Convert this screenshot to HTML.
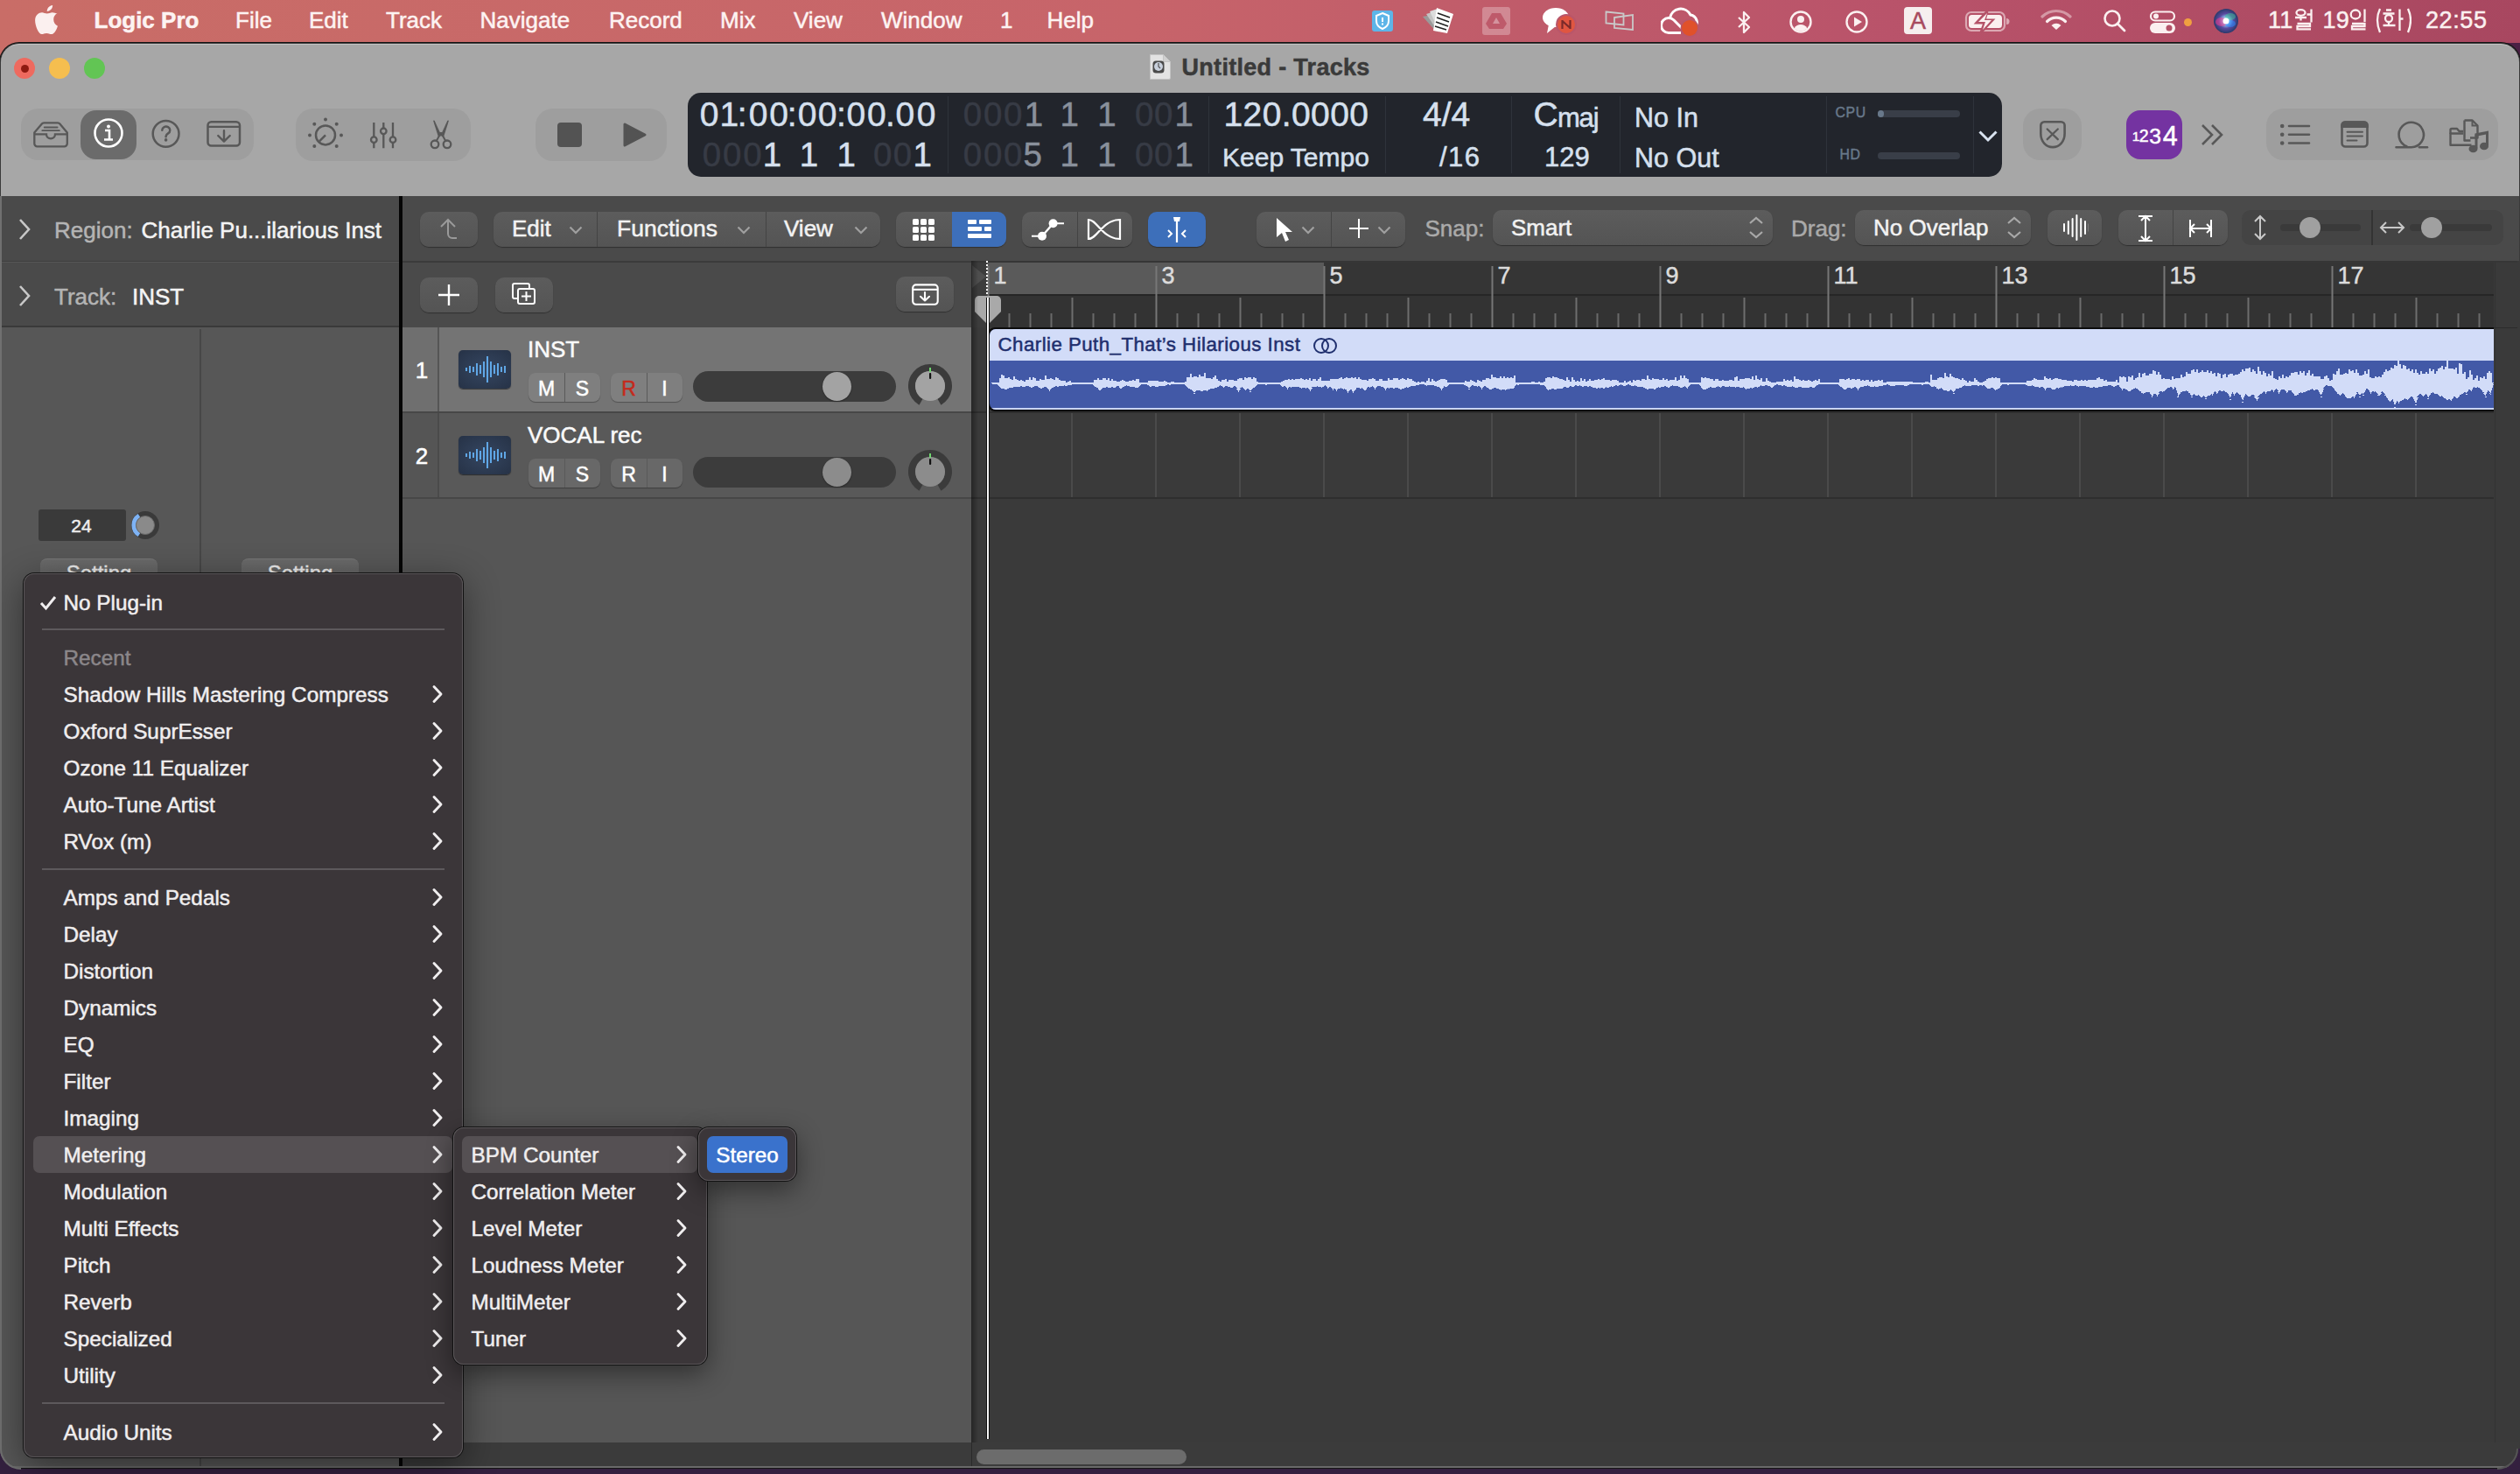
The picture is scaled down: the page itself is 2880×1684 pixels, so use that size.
<!DOCTYPE html>
<html><head><meta charset="utf-8"><style>
html,body{margin:0;padding:0;width:2880px;height:1684px;overflow:hidden;background:#34203f;font-family:"Liberation Sans", sans-serif;}
div,svg{box-sizing:border-box}
div{-webkit-text-stroke-width:0.5px}
</style></head><body>
<div style="position:absolute;left:0px;top:0px;width:2880px;height:52px;background:linear-gradient(90deg,#c96d67 0%,#c7646a 45%,#b9536a 75%,#a84760 100%)"></div><svg style="position:absolute;left:39px;top:5px;" width="30" height="36" viewBox="0 0 30 36"><g transform="scale(1.1)"><path d="M13.500 9.500c-2 0-3.600-1.200-5.300-1.200C5 8.300 1 10.800 1 16.600c0 5.700 3.600 14.400 7 14.400 1.600 0 2.600-1.100 4.900-1.100 2.300 0 2.900 1.100 5 1.100 3 0 5.500-5 6.600-8.600-3-1.300-4.300-3.800-4.300-6.900 0-2.800 1.700-5 3.800-6.100C22.700 9.300 20.500 8.300 18.900 8.300c-2.100 0-3.500 1.200-5.400 1.200zM13.400 7.300c0-3 2.400-6 5.800-6.300.2 3.300-2.400 6.100-5.800 6.300z" fill="#fbf0ef"/></g></svg><div style="position:absolute;left:107.5px;top:8.5px;font-size:26px;line-height:29.9px;color:#fdf3f2;font-weight:700;letter-spacing:0px;white-space:pre;">Logic Pro</div><div style="position:absolute;left:269px;top:8.5px;font-size:26px;line-height:29.9px;color:#fdf3f2;font-weight:400;letter-spacing:0px;white-space:pre;">File</div><div style="position:absolute;left:353px;top:8.5px;font-size:26px;line-height:29.9px;color:#fdf3f2;font-weight:400;letter-spacing:0px;white-space:pre;">Edit</div><div style="position:absolute;left:441px;top:8.5px;font-size:26px;line-height:29.9px;color:#fdf3f2;font-weight:400;letter-spacing:0px;white-space:pre;">Track</div><div style="position:absolute;left:548.5px;top:8.5px;font-size:26px;line-height:29.9px;color:#fdf3f2;font-weight:400;letter-spacing:0px;white-space:pre;">Navigate</div><div style="position:absolute;left:696px;top:8.5px;font-size:26px;line-height:29.9px;color:#fdf3f2;font-weight:400;letter-spacing:0px;white-space:pre;">Record</div><div style="position:absolute;left:823px;top:8.5px;font-size:26px;line-height:29.9px;color:#fdf3f2;font-weight:400;letter-spacing:0px;white-space:pre;">Mix</div><div style="position:absolute;left:907px;top:8.5px;font-size:26px;line-height:29.9px;color:#fdf3f2;font-weight:400;letter-spacing:0px;white-space:pre;">View</div><div style="position:absolute;left:1007px;top:8.5px;font-size:26px;line-height:29.9px;color:#fdf3f2;font-weight:400;letter-spacing:0px;white-space:pre;">Window</div><div style="position:absolute;left:1143px;top:8.5px;font-size:26px;line-height:29.9px;color:#fdf3f2;font-weight:400;letter-spacing:0px;white-space:pre;">1</div><div style="position:absolute;left:1196.5px;top:8.5px;font-size:26px;line-height:29.9px;color:#fdf3f2;font-weight:400;letter-spacing:0px;white-space:pre;">Help</div><div style="position:absolute;left:1568px;top:12px;width:24px;height:24px;background:#5db5e8;border-radius:3px"></div><svg style="position:absolute;left:1568px;top:12px;" width="24" height="24" viewBox="0 0 24 24"><path d="M12 3l7 3v6c0 5-3.5 7.500-7 9-3.500-1.500-7-4-7-9V6z" fill="none" stroke="#fff" stroke-width="2"/><rect x="11" y="8" width="2" height="5" fill="#fff"/><rect x="11" y="14.5" width="2" height="2" fill="#fff"/></svg><svg style="position:absolute;left:1624px;top:7px;" width="40" height="33" viewBox="0 0 40 33"><path d="M2 12l10-2 6 20z" fill="#9a9a9a"/><path d="M6 9l10-3 4 24z" fill="#c4c4c4"/><path d="M10 6l9-3 2 26z" fill="#dcdcdc"/><path d="M18 2l19 7-7 22-16-3z" fill="#fff"/><path d="M19 8l14 5M18 13l14 5M17 18l14 5M16 23l13 4" stroke="#222" stroke-width="1.8"/></svg><div style="position:absolute;left:1694px;top:8px;width:32px;height:32px;background:rgba(255,255,255,.28);border-radius:3px"></div><svg style="position:absolute;left:1694px;top:8px;" width="32" height="32" viewBox="0 0 32 32"><path d="M11 7h10l7 12-4 6H8l-4-6z" fill="#be5a6a"/><path d="M16 12l4 7h-8z" fill="rgba(255,255,255,.35)"/></svg><svg style="position:absolute;left:1762px;top:7px;" width="44" height="34" viewBox="0 0 44 34"><ellipse cx="16" cy="13" rx="15" ry="11" fill="#fff"/><path d="M8 21l-2 10 10-8z" fill="#fff"/><circle cx="28" cy="21" r="12" fill="#b9566a"/><circle cx="28" cy="21" r="10" fill="#e05641"/><path d="M23.5 16v10M32.5 16v10M23.5 17l9 8" stroke="#7a2a2a" stroke-width="2.2"/></svg><svg style="position:absolute;left:1834px;top:12px;" width="34" height="25" viewBox="0 0 34 25"><path d="M1.5 1.5l20 2v13l-20-2z" fill="none" stroke="#c9c9c9" stroke-width="1.8"/><path d="M11 8l21-3v17l-21-2z" fill="none" stroke="#c9c9c9" stroke-width="1.8"/></svg><svg style="position:absolute;left:1898px;top:8px;" width="48" height="36" viewBox="0 0 48 36"><path d="M9 29.500a8.500 8.500 0 0 1 0-17 8.500 8.500 0 0 1 6 2.500l9 9a8.500 8.500 0 0 0 6 2.500" fill="none" stroke="#fff" stroke-width="3"/><path d="M10.500 12.600A12.500 12.500 0 0 1 34 9a9 9 0 0 1 5 15" fill="none" stroke="#fff" stroke-width="3"/><path d="M9 29.500h14" stroke="#fff" stroke-width="3"/><circle cx="33" cy="24" r="10.500" fill="#b9566a"/><circle cx="33" cy="24" r="9" fill="#e0512a"/></svg><svg style="position:absolute;left:1982px;top:12px;" width="22" height="28" viewBox="0 0 22 28"><path d="M5 8l12 11-6 6V2l6 6L5 19" fill="none" stroke="#fbf0f0" stroke-width="2.3" stroke-linejoin="round"/></svg><svg style="position:absolute;left:2044px;top:11px;" width="28" height="28" viewBox="0 0 28 28"><circle cx="14" cy="14" r="11.5" fill="none" stroke="#fbf0f0" stroke-width="2.4"/><circle cx="14" cy="11" r="4" fill="#fbf0f0"/><path d="M6.5 21.5c2-3.500 4.500-4.500 7.500-4.500s5.500 1 7.500 4.500A11 11 0 0 1 6.500 21.500z" fill="#fbf0f0"/></svg><svg style="position:absolute;left:2108px;top:11px;" width="28" height="28" viewBox="0 0 28 28"><circle cx="14" cy="14" r="11.5" fill="none" stroke="#fbf0f0" stroke-width="2.4"/><path d="M11 8.5v11l9-5.500z" fill="#fbf0f0"/></svg><div style="position:absolute;left:2176px;top:8px;width:32px;height:31px;background:#f6eeee;border-radius:4px"></div><div style="position:absolute;left:2176.0px;width:32px;text-align:center;top:8.6px;font-size:27px;line-height:31.0px;color:#a84a5e;font-weight:400;letter-spacing:0px;white-space:pre">A</div><svg style="position:absolute;left:2245px;top:12px;" width="54" height="26" viewBox="0 0 54 26"><rect x="2" y="2" width="44" height="21" rx="6" fill="none" stroke="rgba(251,240,240,.55)" stroke-width="2.2"/><rect x="5" y="5" width="38" height="15" rx="3.5" fill="#fbf0f0"/><path d="M48 9v7a3 3 0 0 0 0-7z" fill="rgba(251,240,240,.55)"/><path d="M26 1L14 14h9l-4 11 13-14h-9z" fill="#b45268" stroke="#b45268" stroke-width="3"/><path d="M26 3L16 13h8l-3 9 10-11h-8z" fill="#fbf0f0"/></svg><svg style="position:absolute;left:2332px;top:10px;" width="36" height="26" viewBox="0 0 36 26"><path d="M2 9a23 23 0 0 1 32 0" fill="none" stroke="rgba(251,240,240,.45)" stroke-width="3.2" stroke-linecap="round"/><path d="M7.5 14.500a15 15 0 0 1 21 0" fill="none" stroke="#fbf0f0" stroke-width="3.2" stroke-linecap="round"/><path d="M18 24l-5.500-5a8 8 0 0 1 11 0z" fill="#fbf0f0"/></svg><svg style="position:absolute;left:2402px;top:9px;" width="30" height="30" viewBox="0 0 30 30"><circle cx="12" cy="12" r="8.5" fill="none" stroke="#fbf0f0" stroke-width="2.6"/><path d="M18 18l8 8" stroke="#fbf0f0" stroke-width="2.8" stroke-linecap="round"/></svg><svg style="position:absolute;left:2456px;top:12px;" width="32" height="27" viewBox="0 0 32 27"><rect x="2" y="1.5" width="27" height="10" rx="5" fill="none" stroke="#fbf0f0" stroke-width="2.2"/><circle cx="8" cy="6.5" r="3" fill="#fbf0f0"/><rect x="1" y="14" width="29" height="12" rx="6" fill="#fbf0f0"/><circle cx="23" cy="20" r="3.5" fill="#b45268"/></svg><div style="position:absolute;left:2496px;top:21px;width:9px;height:9px;background:#f0a040;border-radius:50%"></div><svg style="position:absolute;left:2528px;top:8px;" width="32" height="32" viewBox="0 0 32 32"><defs><radialGradient id="sg" cx="50%" cy="50%" r="50%"><stop offset="0" stop-color="#fff"/><stop offset=".25" stop-color="#9ad7ff"/><stop offset=".6" stop-color="#5a4aa0"/><stop offset="1" stop-color="#2a3a6a"/></radialGradient></defs><circle cx="16" cy="16" r="14" fill="url(#sg)"/><ellipse cx="11" cy="17" rx="7" ry="5" fill="rgba(240,60,140,.55)"/><ellipse cx="21" cy="11" rx="6" ry="4" fill="rgba(60,200,150,.5)"/><ellipse cx="21" cy="19" rx="6" ry="4" fill="rgba(40,140,255,.55)"/><circle cx="16" cy="16" r="3.5" fill="#fff"/></svg><div style="position:absolute;left:2592px;top:7.8px;font-size:27px;line-height:31.0px;color:#fbf0f0;font-weight:400;letter-spacing:0.3px;white-space:pre;">11</div><svg style="position:absolute;left:2622px;top:10px;" width="24" height="25" viewBox="0 0 24 25"><g fill="none" stroke="#fbf0f0" stroke-width="2.3"><ellipse cx="7.5" cy="4.5" rx="5" ry="3.3"/><path d="M1 10h13M7.5 10v3.5M19.5 0.5v15M14.500 6.500h5M3.500 17h14.500v3H3.500v3.300H19"/></g></svg><div style="position:absolute;left:2654.5px;top:7.8px;font-size:27px;line-height:31.0px;color:#fbf0f0;font-weight:400;letter-spacing:0.3px;white-space:pre;">19</div><svg style="position:absolute;left:2685px;top:10px;" width="22" height="25" viewBox="0 0 22 25"><g fill="none" stroke="#fbf0f0" stroke-width="2.3"><ellipse cx="7" cy="6.5" rx="5.3" ry="5"/><path d="M17.5 0.5v14.500M3 17h14.500v3H3v3.300h15.500"/></g></svg><svg style="position:absolute;left:2714px;top:9px;" width="42" height="30" viewBox="0 0 42 30"><g fill="none" stroke="#fbf0f0" stroke-width="2.3"><path d="M6 1Q0 13.500 6 28"/><path d="M38 1Q44 13.500 38 28"/><path d="M13 2.500h6M9.500 6.500h13"/><circle cx="16" cy="12" r="4"/><path d="M16 16v4M9.500 20h14M28.500 1.500v24.500M28.500 12.500h4"/></g></svg><div style="position:absolute;left:2772px;top:7.8px;font-size:27px;line-height:31.0px;color:#fbf0f0;font-weight:400;letter-spacing:0.6px;white-space:pre;">22:55</div><div style="position:absolute;left:0px;top:49px;width:2880px;height:50px;background:linear-gradient(90deg,#c96d67 0%,#c7646a 45%,#9a4260 80%,#4a2044 100%)"></div><div style="position:absolute;left:0px;top:49px;width:2879.5px;height:1628px;background:#3a3a3a;border-radius:22px;box-shadow:0 0 0 1px #151515;overflow:hidden"></div><div style="position:absolute;left:1px;top:50px;width:2877.5px;height:174px;background:#a7a7a7;border-radius:21px 21px 0 0;border-top:1px solid #c4c4c4"></div><div style="position:absolute;left:16px;top:66px;width:24px;height:24px;background:#ee6a5f;border-radius:50%"></div><div style="position:absolute;left:56px;top:66px;width:24px;height:24px;background:#f5be4f;border-radius:50%"></div><div style="position:absolute;left:96px;top:66px;width:24px;height:24px;background:#62c554;border-radius:50%"></div><div style="position:absolute;left:23.5px;top:73.5px;width:9px;height:9px;background:#8f1a11;border-radius:50%"></div><svg style="position:absolute;left:1313px;top:61px;" width="26" height="30" viewBox="0 0 26 30"><path d="M1.500 1.500h15l8 8v18.500a1.500 1.500 0 0 1-1.500 1.500H1.500z" fill="#e3e3e3" stroke="#c4c4c4" stroke-width="1"/><path d="M16.500 1.500v8h8" fill="#d0d0d0" stroke="#c4c4c4" stroke-width="1"/><rect x="4.500" y="8.500" width="13" height="14" rx="3.500" fill="#4a4a4a"/><circle cx="11" cy="15" r="5" fill="#c8d0dc"/><path d="M11 11v4l2 2" stroke="#555" stroke-width="1.200" fill="none"/></svg><div style="position:absolute;left:1350.5px;top:61.6px;font-size:27px;line-height:31.0px;color:#3a3a3a;font-weight:700;letter-spacing:0.3px;white-space:pre;">Untitled - Tracks</div><div style="position:absolute;left:24px;top:124px;width:266px;height:59px;background:#9e9e9e;border-radius:20px"></div><div style="position:absolute;left:92px;top:126px;width:64px;height:56px;background:#6b6b6b;border-radius:18px"></div><svg style="position:absolute;left:34px;top:136px;" width="48" height="36" viewBox="0 0 48 36"><path d="M5.300 15.500L13.800 5.500Q14.600 4.300 16.200 4.300H32Q33.600 4.300 34.400 5.500L42.800 15.500V28a3.300 3.300 0 0 1-3.300 3.300H8.600a3.300 3.300 0 0 1-3.300-3.300z" fill="none" stroke="#585858" stroke-width="2.300" stroke-linejoin="round"/><path d="M5.300 17.300H19a5 5 0 0 0 10 0H42.800" fill="none" stroke="#585858" stroke-width="2.300"/><path d="M16.700 9.500H31.600M14.300 13.200H33.900" stroke="#585858" stroke-width="1.800" stroke-linecap="round"/></svg><svg style="position:absolute;left:106px;top:134px;" width="36" height="36" viewBox="0 0 36 36"><circle cx="18" cy="18" r="15.5" fill="none" stroke="#fff" stroke-width="2.6"/><circle cx="18" cy="10.5" r="2" fill="#fff"/><path d="M14 15h5v10M13 25.5h10" fill="none" stroke="#fff" stroke-width="2.6"/></svg><svg style="position:absolute;left:172px;top:134px;" width="36" height="38" viewBox="0 0 36 38"><circle cx="17.600" cy="18.800" r="14.900" fill="none" stroke="#585858" stroke-width="2.500"/><path d="M13.300 14.700a4.500 4.200 0 1 1 6.800 3.700c-1.300.800-2.500 1.700-2.500 3.300v.500" fill="none" stroke="#585858" stroke-width="2.500" stroke-linecap="round"/><circle cx="17.600" cy="25.900" r="1.800" fill="#585858"/></svg><svg style="position:absolute;left:234px;top:136px;" width="44" height="36" viewBox="0 0 44 36"><rect x="3.500" y="3.300" width="36.500" height="27.300" rx="4" fill="none" stroke="#585858" stroke-width="2.500"/><path d="M3.500 8.800h36.500" stroke="#585858" stroke-width="2.300"/><path d="M22 13.200v12.200M15.300 19l6.700 6.600 6.700-6.600" fill="none" stroke="#585858" stroke-width="2.400" stroke-linecap="round" stroke-linejoin="round"/></svg><div style="position:absolute;left:338px;top:124px;width:200px;height:60px;background:#9e9e9e;border-radius:20px"></div><svg style="position:absolute;left:350px;top:132px;" width="44" height="44" viewBox="0 0 44 44"><circle cx="22" cy="22.4" r="11" fill="none" stroke="#585858" stroke-width="2.5"/><path d="M22 22.4l-7 7" stroke="#585858" stroke-width="2.5"/><circle cx="22.0" cy="4.4" r="2" fill="#585858"/><circle cx="34.7" cy="9.7" r="2" fill="#585858"/><circle cx="9.3" cy="9.7" r="2" fill="#585858"/><circle cx="40.0" cy="22.4" r="2" fill="#585858"/><circle cx="4.0" cy="22.4" r="2" fill="#585858"/><circle cx="34.7" cy="35.1" r="2" fill="#585858"/><circle cx="9.3" cy="35.1" r="2" fill="#585858"/></svg><svg style="position:absolute;left:418px;top:136px;" width="40" height="38" viewBox="0 0 40 38"><path d="M9.3 4v29.300M20.3 4v29.300M31 4v29.300" stroke="#585858" stroke-width="2.3"/><circle cx="9.3" cy="23.700" r="3.300" fill="#9e9e9e" stroke="#585858" stroke-width="2.3"/><circle cx="20.3" cy="13.800" r="3.300" fill="#9e9e9e" stroke="#585858" stroke-width="2.3"/><circle cx="31" cy="23.700" r="3.300" fill="#9e9e9e" stroke="#585858" stroke-width="2.3"/></svg><svg style="position:absolute;left:484px;top:134px;" width="40" height="40" viewBox="0 0 40 40"><path d="M12 4.300L17.500 21.500 19.500 20.500zM28 4.300L22.500 21.500 20.500 20.500z" fill="#585858" stroke="#585858" stroke-width="1.6" stroke-linejoin="round"/><path d="M14.500 27.500L20 17.500M25.500 27.500L20 17.500" stroke="#585858" stroke-width="2"/><circle cx="13" cy="30.800" r="4.300" fill="none" stroke="#585858" stroke-width="2.3"/><circle cx="27" cy="30.800" r="4.300" fill="none" stroke="#585858" stroke-width="2.3"/></svg><div style="position:absolute;left:612px;top:124px;width:150px;height:60px;background:#9e9e9e;border-radius:20px"></div><div style="position:absolute;left:636.5px;top:140px;width:28px;height:28px;background:#535353;border-radius:4px"></div><svg style="position:absolute;left:710px;top:138px;" width="32" height="32" viewBox="0 0 32 32"><path d="M4 4L27 16L4 28z" fill="#535353" stroke="#535353" stroke-width="3" stroke-linejoin="round"/></svg><div style="position:absolute;left:786px;top:106px;width:1502px;height:96px;background:#22252c;border-radius:15px"></div><div style="position:absolute;left:1083px;top:110px;width:1px;height:88px;background:#2f333b"></div><div style="position:absolute;left:1381px;top:110px;width:1px;height:88px;background:#2f333b"></div><div style="position:absolute;left:1583px;top:110px;width:1px;height:88px;background:#2f333b"></div><div style="position:absolute;left:1727px;top:110px;width:1px;height:88px;background:#2f333b"></div><div style="position:absolute;left:1851px;top:110px;width:1px;height:88px;background:#2f333b"></div><div style="position:absolute;left:2087px;top:110px;width:1px;height:88px;background:#2f333b"></div><div style="position:absolute;left:2255px;top:110px;width:1px;height:88px;background:#2f333b"></div><div style="position:absolute;left:790.5px;top:109.0px;width:40px;text-align:center;font-size:39px;line-height:44.8px;color:#d6e0ee;white-space:pre">0</div><div style="position:absolute;left:813.3px;top:109.0px;width:40px;text-align:center;font-size:39px;line-height:44.8px;color:#d6e0ee;white-space:pre">1</div><div style="position:absolute;left:828.1px;top:109.0px;width:40px;text-align:center;font-size:39px;line-height:44.8px;color:#d6e0ee;white-space:pre">:</div><div style="position:absolute;left:846.5px;top:109.0px;width:40px;text-align:center;font-size:39px;line-height:44.8px;color:#d6e0ee;white-space:pre">0</div><div style="position:absolute;left:870.0px;top:109.0px;width:40px;text-align:center;font-size:39px;line-height:44.8px;color:#d6e0ee;white-space:pre">0</div><div style="position:absolute;left:885.2px;top:109.0px;width:40px;text-align:center;font-size:39px;line-height:44.8px;color:#d6e0ee;white-space:pre">:</div><div style="position:absolute;left:902.5px;top:109.0px;width:40px;text-align:center;font-size:39px;line-height:44.8px;color:#d6e0ee;white-space:pre">0</div><div style="position:absolute;left:925.6px;top:109.0px;width:40px;text-align:center;font-size:39px;line-height:44.8px;color:#d6e0ee;white-space:pre">0</div><div style="position:absolute;left:941.4px;top:109.0px;width:40px;text-align:center;font-size:39px;line-height:44.8px;color:#d6e0ee;white-space:pre">:</div><div style="position:absolute;left:958.4px;top:109.0px;width:40px;text-align:center;font-size:39px;line-height:44.8px;color:#d6e0ee;white-space:pre">0</div><div style="position:absolute;left:981.9px;top:109.0px;width:40px;text-align:center;font-size:39px;line-height:44.8px;color:#d6e0ee;white-space:pre">0</div><div style="position:absolute;left:997.4px;top:109.0px;width:40px;text-align:center;font-size:39px;line-height:44.8px;color:#d6e0ee;white-space:pre">.</div><div style="position:absolute;left:1014.3px;top:109.0px;width:40px;text-align:center;font-size:39px;line-height:44.8px;color:#d6e0ee;white-space:pre">0</div><div style="position:absolute;left:1038.5px;top:109.0px;width:40px;text-align:center;font-size:39px;line-height:44.8px;color:#d6e0ee;white-space:pre">0</div><div style="position:absolute;left:793.5px;top:155.3px;width:40px;text-align:center;font-size:38.5px;line-height:44.3px;color:#373b45;white-space:pre">0</div><div style="position:absolute;left:816.7px;top:155.3px;width:40px;text-align:center;font-size:38.5px;line-height:44.3px;color:#373b45;white-space:pre">0</div><div style="position:absolute;left:840.0px;top:155.3px;width:40px;text-align:center;font-size:38.5px;line-height:44.3px;color:#373b45;white-space:pre">0</div><div style="position:absolute;left:862.4px;top:155.3px;width:40px;text-align:center;font-size:38.5px;line-height:44.3px;color:#d6e0ee;white-space:pre">1</div><div style="position:absolute;left:904.4px;top:155.3px;width:40px;text-align:center;font-size:38.5px;line-height:44.3px;color:#d6e0ee;white-space:pre">1</div><div style="position:absolute;left:947.3px;top:155.3px;width:40px;text-align:center;font-size:38.5px;line-height:44.3px;color:#d6e0ee;white-space:pre">1</div><div style="position:absolute;left:988.8px;top:155.3px;width:40px;text-align:center;font-size:38.5px;line-height:44.3px;color:#373b45;white-space:pre">0</div><div style="position:absolute;left:1011.5px;top:155.3px;width:40px;text-align:center;font-size:38.5px;line-height:44.3px;color:#373b45;white-space:pre">0</div><div style="position:absolute;left:1034.2px;top:155.3px;width:40px;text-align:center;font-size:38.5px;line-height:44.3px;color:#d6e0ee;white-space:pre">1</div><div style="position:absolute;left:1091.5px;top:109.4px;width:40px;text-align:center;font-size:38.5px;line-height:44.3px;color:#373b45;white-space:pre">0</div><div style="position:absolute;left:1114.7px;top:109.4px;width:40px;text-align:center;font-size:38.5px;line-height:44.3px;color:#373b45;white-space:pre">0</div><div style="position:absolute;left:1137.7px;top:109.4px;width:40px;text-align:center;font-size:38.5px;line-height:44.3px;color:#373b45;white-space:pre">0</div><div style="position:absolute;left:1161.5px;top:109.4px;width:40px;text-align:center;font-size:38.5px;line-height:44.3px;color:#89909b;white-space:pre">1</div><div style="position:absolute;left:1202.2px;top:109.4px;width:40px;text-align:center;font-size:38.5px;line-height:44.3px;color:#89909b;white-space:pre">1</div><div style="position:absolute;left:1245.0px;top:109.4px;width:40px;text-align:center;font-size:38.5px;line-height:44.3px;color:#89909b;white-space:pre">1</div><div style="position:absolute;left:1287.7px;top:109.4px;width:40px;text-align:center;font-size:38.5px;line-height:44.3px;color:#373b45;white-space:pre">0</div><div style="position:absolute;left:1309.6px;top:109.4px;width:40px;text-align:center;font-size:38.5px;line-height:44.3px;color:#373b45;white-space:pre">0</div><div style="position:absolute;left:1333.2px;top:109.4px;width:40px;text-align:center;font-size:38.5px;line-height:44.3px;color:#89909b;white-space:pre">1</div><div style="position:absolute;left:1091.5px;top:155.3px;width:40px;text-align:center;font-size:38.5px;line-height:44.3px;color:#373b45;white-space:pre">0</div><div style="position:absolute;left:1114.7px;top:155.3px;width:40px;text-align:center;font-size:38.5px;line-height:44.3px;color:#373b45;white-space:pre">0</div><div style="position:absolute;left:1137.7px;top:155.3px;width:40px;text-align:center;font-size:38.5px;line-height:44.3px;color:#373b45;white-space:pre">0</div><div style="position:absolute;left:1160.2px;top:155.3px;width:40px;text-align:center;font-size:38.5px;line-height:44.3px;color:#89909b;white-space:pre">5</div><div style="position:absolute;left:1202.2px;top:155.3px;width:40px;text-align:center;font-size:38.5px;line-height:44.3px;color:#89909b;white-space:pre">1</div><div style="position:absolute;left:1245.0px;top:155.3px;width:40px;text-align:center;font-size:38.5px;line-height:44.3px;color:#89909b;white-space:pre">1</div><div style="position:absolute;left:1287.7px;top:155.3px;width:40px;text-align:center;font-size:38.5px;line-height:44.3px;color:#373b45;white-space:pre">0</div><div style="position:absolute;left:1309.6px;top:155.3px;width:40px;text-align:center;font-size:38.5px;line-height:44.3px;color:#373b45;white-space:pre">0</div><div style="position:absolute;left:1333.2px;top:155.3px;width:40px;text-align:center;font-size:38.5px;line-height:44.3px;color:#89909b;white-space:pre">1</div><div style="position:absolute;left:1398.5px;top:109.1px;font-size:39px;line-height:44.8px;color:#d6e0ee;font-weight:400;letter-spacing:0.4px;white-space:pre;">120.0000</div><div style="position:absolute;left:1397px;top:163.2px;font-size:30px;line-height:34.5px;color:#d6e0ee;font-weight:400;letter-spacing:0px;white-space:pre;">Keep Tempo</div><div style="position:absolute;left:1626px;top:109.1px;font-size:39px;line-height:44.8px;color:#d6e0ee;font-weight:400;letter-spacing:0px;white-space:pre;">4/4</div><div style="position:absolute;left:1645px;top:162.2px;font-size:31px;line-height:35.6px;color:#d6e0ee;font-weight:400;letter-spacing:1.5px;white-space:pre;">/16</div><div style="position:absolute;left:1752.5px;top:109.4px;font-size:39px;line-height:44.8px;color:#d6e0ee;font-weight:400;letter-spacing:0px;white-space:pre;">C</div><div style="position:absolute;left:1780px;top:116.6px;font-size:31px;line-height:35.6px;color:#d6e0ee;font-weight:400;letter-spacing:-1.2px;white-space:pre;">maj</div><div style="position:absolute;left:1765px;top:162.2px;font-size:31px;line-height:35.6px;color:#d6e0ee;font-weight:400;letter-spacing:0px;white-space:pre;">129</div><div style="position:absolute;left:1868px;top:116.6px;font-size:30.5px;line-height:35.1px;color:#d6e0ee;font-weight:400;letter-spacing:0px;white-space:pre;">No In</div><div style="position:absolute;left:1868px;top:162.7px;font-size:30.5px;line-height:35.1px;color:#d6e0ee;font-weight:400;letter-spacing:0px;white-space:pre;">No Out</div><div style="position:absolute;left:2097.5px;top:119.6px;font-size:15.8px;line-height:18.2px;color:#68788a;font-weight:400;letter-spacing:0.6px;white-space:pre;">CPU</div><div style="position:absolute;left:2102.5px;top:167.8px;font-size:15.8px;line-height:18.2px;color:#68788a;font-weight:400;letter-spacing:0.6px;white-space:pre;">HD</div><div style="position:absolute;left:2146px;top:126.2px;width:94px;height:7.8px;background:#393e48;border-radius:4px"></div><div style="position:absolute;left:2146px;top:126.2px;width:6.5px;height:7.8px;background:#68788a;border-radius:4px"></div><div style="position:absolute;left:2146px;top:174px;width:94px;height:7.8px;background:#393e48;border-radius:4px"></div><svg style="position:absolute;left:2258px;top:146px;" width="28" height="20" viewBox="0 0 28 20"><path d="M4.500 4.500l9.500 9.500 9.500-9.500" fill="none" stroke="#d9e3f0" stroke-width="3"/></svg><div style="position:absolute;left:2312px;top:124px;width:67px;height:59px;background:#9e9e9e;border-radius:20px"></div><svg style="position:absolute;left:2330px;top:136px;" width="32" height="36" viewBox="0 0 32 36"><path d="M2.300 7.300a4 4 0 0 1 4-4h19.300a4 4 0 0 1 4 4v9.500c0 9-6.100 15.300-13.650 15.300S2.300 25.800 2.300 16.800z" fill="none" stroke="#585858" stroke-width="2.600"/><path d="M9.700 11.500l12.100 11.700M21.800 11.500L9.700 23.200" stroke="#585858" stroke-width="2.300" stroke-linecap="round"/></svg><div style="position:absolute;left:2430px;top:126px;width:64px;height:56px;background:#7433a1;border-radius:16px"></div><div style="position:absolute;left:2421.1px;top:146.5px;width:40px;text-align:center;font-size:15.5px;line-height:17.8px;color:#fff;white-space:pre">1</div><div style="position:absolute;left:2430.3px;top:144.3px;width:40px;text-align:center;font-size:19.5px;line-height:22.4px;color:#fff;white-space:pre">2</div><div style="position:absolute;left:2443.0px;top:141.5px;width:40px;text-align:center;font-size:24.7px;line-height:28.4px;color:#fff;white-space:pre">3</div><div style="position:absolute;left:2460.3px;top:138.3px;width:40px;text-align:center;font-size:30.5px;line-height:35.1px;color:#fff;white-space:pre">4</div><svg style="position:absolute;left:2514px;top:140px;" width="30" height="28" viewBox="0 0 30 28"><path d="M3 3l11 11L3 25M14 3l11 11L14 25" fill="none" stroke="#585858" stroke-width="2.6"/></svg><div style="position:absolute;left:2590px;top:124px;width:265px;height:59px;background:#9e9e9e;border-radius:20px"></div><svg style="position:absolute;left:2600px;top:136px;" width="44" height="34" viewBox="0 0 44 34"><circle cx="8.200" cy="8" r="2.300" fill="#585858"/><circle cx="8.200" cy="17.750" r="2.300" fill="#585858"/><circle cx="8.200" cy="27.500" r="2.300" fill="#585858"/><path d="M16 8h23M16 17.750h23M16 27.500h23" stroke="#585858" stroke-width="2.600" stroke-linecap="round"/></svg><svg style="position:absolute;left:2672px;top:135px;" width="38" height="36" viewBox="0 0 38 36"><rect x="4.500" y="4.500" width="29" height="28" rx="4" fill="none" stroke="#585858" stroke-width="2.600"/><path d="M3.200 8a4.800 4.800 0 0 1 4.800-4.800h22a4.800 4.800 0 0 1 4.800 4.800v3H3.200z" fill="#585858"/><path d="M10.500 15.700h17.500M10.500 20.500h17.500M10.500 25.500h11" stroke="#585858" stroke-width="2" stroke-linecap="round"/></svg><svg style="position:absolute;left:2734px;top:134px;" width="44" height="40" viewBox="0 0 44 40"><path d="M4.500 34.200H21.800A14.200 14.200 0 1 0 16.500 33.200" fill="none" stroke="#585858" stroke-width="2.600" stroke-linecap="round"/><path d="M31 34.200h9" stroke="#585858" stroke-width="2.600" stroke-linecap="round"/></svg><svg style="position:absolute;left:2796px;top:132px;" width="54" height="44" viewBox="0 0 54 44"><path d="M19 20.500H4.500V33.800h24" fill="none" stroke="#585858" stroke-width="2.400" stroke-linejoin="round"/><path d="M4.500 21V16.500a1.500 1.500 0 0 1 1.500-1.500h6l2.500 3h4.500" fill="none" stroke="#585858" stroke-width="2.400" stroke-linejoin="round"/><path d="M20.500 5.500h9l6 6v14h-8.500M20.500 5.500V28.500h7" fill="none" stroke="#585858" stroke-width="2.400" stroke-linejoin="round"/><path d="M29.500 5.500v6h6" fill="none" stroke="#585858" stroke-width="2"/><path d="M32.500 20.500l15.500-3v3.500l-15.500 3z" fill="#585858"/><path d="M34 21.500v16M46.500 18.500v16" stroke="#585858" stroke-width="3"/><ellipse cx="30.500" cy="38" rx="5" ry="4.300" fill="#585858"/><ellipse cx="43" cy="35" rx="5" ry="4.300" fill="#585858"/></svg><div style="position:absolute;left:2px;top:224px;width:454px;height:1452px;background:#575757"></div><div style="position:absolute;left:2px;top:224px;width:454px;height:75px;background:#4a4a4a;border-bottom:1px solid #3e3e3e"></div><div style="position:absolute;left:2px;top:300px;width:454px;height:74px;background:#4a4a4a;border-bottom:2px solid #3a3a3a"></div><svg style="position:absolute;left:20px;top:248px;" width="16" height="28" viewBox="0 0 16 28"><path d="M3 3l10 11L3 25" fill="none" stroke="#c8c8c8" stroke-width="2.6"/></svg><div style="position:absolute;left:62px;top:248.5px;font-size:26px;line-height:29.9px;color:#b4b4b4;font-weight:400;letter-spacing:0px;white-space:pre;">Region:</div><div style="position:absolute;left:161.5px;top:248.5px;font-size:26px;line-height:29.9px;color:#f4f4f4;font-weight:400;letter-spacing:0px;white-space:pre;">Charlie Pu...ilarious Inst</div><svg style="position:absolute;left:20px;top:324px;" width="16" height="28" viewBox="0 0 16 28"><path d="M3 3l10 11L3 25" fill="none" stroke="#c8c8c8" stroke-width="2.6"/></svg><div style="position:absolute;left:62px;top:325.0px;font-size:26px;line-height:29.9px;color:#b4b4b4;font-weight:400;letter-spacing:0px;white-space:pre;">Track:</div><div style="position:absolute;left:151px;top:325.0px;font-size:26px;line-height:29.9px;color:#f4f4f4;font-weight:400;letter-spacing:0px;white-space:pre;">INST</div><div style="position:absolute;left:228px;top:376px;width:1.5px;height:1300px;background:#474747"></div><div style="position:absolute;left:44px;top:582px;width:100px;height:36px;background:#3a3a3a;border-radius:3px"></div><div style="position:absolute;left:-7.0px;width:200px;text-align:center;top:589.0px;font-size:21px;line-height:24.1px;color:#eee;font-weight:400;letter-spacing:0px;white-space:pre">24</div><div style="position:absolute;left:150px;top:584px;width:32px;height:32px;background:#3a3a3a;border-radius:50%"></div><svg style="position:absolute;left:150px;top:584px;" width="32" height="32" viewBox="0 0 32 32"><path d="M9 27A13 13 0 0 1 9 5" fill="none" stroke="#7eb3f5" stroke-width="5"/><circle cx="16" cy="16" r="10.5" fill="#8a8a8a" stroke="#6a6a6a" stroke-width="1"/></svg><div style="position:absolute;left:46px;top:638px;width:134px;height:40px;background:linear-gradient(#6a6a6a,#5e5e5e);border-radius:8px;border-top:1px solid #777"></div><div style="position:absolute;left:276px;top:638px;width:134px;height:40px;background:linear-gradient(#6a6a6a,#5e5e5e);border-radius:8px;border-top:1px solid #777"></div><div style="position:absolute;left:13.0px;width:200px;text-align:center;top:641.3px;font-size:24px;line-height:27.6px;color:#eee;font-weight:400;letter-spacing:0px;white-space:pre">Setting</div><div style="position:absolute;left:243.0px;width:200px;text-align:center;top:641.3px;font-size:24px;line-height:27.6px;color:#eee;font-weight:400;letter-spacing:0px;white-space:pre">Setting</div><div style="position:absolute;left:456px;top:224px;width:4px;height:1452px;background:#050505"></div><div style="position:absolute;left:460px;top:224px;width:2419px;height:75px;background:#4a4a4a;border-bottom:1px solid #3c3c3c"></div><div style="position:absolute;left:460px;top:300px;width:650px;height:74px;background:#4a4a4a"></div><div style="position:absolute;left:480px;top:242px;width:66px;height:40px;background:linear-gradient(#5c5c5c,#545454);border-radius:10px;box-shadow:0 1px 1px rgba(0,0,0,.35)"></div><svg style="position:absolute;left:500px;top:248px;" width="32" height="28" viewBox="0 0 32 28"><path d="M4 11L12 3l8 8M12 3v16a5 5 0 0 0 5 5h5" fill="none" stroke="#9a9a9a" stroke-width="2"/></svg><div style="position:absolute;left:564px;top:242px;width:442px;height:40px;background:linear-gradient(#5c5c5c,#545454);border-radius:10px;box-shadow:0 1px 1px rgba(0,0,0,.35)"></div><div style="position:absolute;left:682px;top:242px;width:1px;height:40px;background:#444"></div><div style="position:absolute;left:875px;top:242px;width:1px;height:40px;background:#444"></div><div style="position:absolute;left:585px;top:246.5px;font-size:26px;line-height:29.9px;color:#f2f2f2;font-weight:400;letter-spacing:0px;white-space:pre;">Edit</div><div style="position:absolute;left:705px;top:246.0px;font-size:26.5px;line-height:30.5px;color:#f2f2f2;font-weight:400;letter-spacing:0px;white-space:pre;">Functions</div><div style="position:absolute;left:896px;top:246.5px;font-size:26px;line-height:29.9px;color:#f2f2f2;font-weight:400;letter-spacing:0px;white-space:pre;">View</div><svg style="position:absolute;left:650px;top:258px;" width="16" height="10" viewBox="0 0 16 10"><path d="M1.5 1.5L8 8l6.5-6.5" fill="none" stroke="#a0a0a0" stroke-width="2.2"/></svg><svg style="position:absolute;left:842px;top:258px;" width="16" height="10" viewBox="0 0 16 10"><path d="M1.5 1.5L8 8l6.5-6.5" fill="none" stroke="#a0a0a0" stroke-width="2.2"/></svg><svg style="position:absolute;left:976px;top:258px;" width="16" height="10" viewBox="0 0 16 10"><path d="M1.5 1.5L8 8l6.5-6.5" fill="none" stroke="#a0a0a0" stroke-width="2.2"/></svg><div style="position:absolute;left:1024px;top:242px;width:126px;height:40px;background:linear-gradient(#5c5c5c,#545454);border-radius:10px;box-shadow:0 1px 1px rgba(0,0,0,.35)"></div><div style="position:absolute;left:1088px;top:242px;width:62px;height:40px;background:#3d6fba;border-radius:0 10px 10px 0"></div><svg style="position:absolute;left:1040px;top:248px;" width="32" height="28" viewBox="0 0 32 28"><rect x="3" y="2" width="7" height="7" rx="1.5" fill="#fff"/><rect x="3" y="11" width="7" height="7" rx="1.5" fill="#fff"/><rect x="3" y="20" width="7" height="7" rx="1.5" fill="#fff"/><rect x="12" y="2" width="7" height="7" rx="1.5" fill="#fff"/><rect x="12" y="11" width="7" height="7" rx="1.5" fill="#fff"/><rect x="12" y="20" width="7" height="7" rx="1.5" fill="#fff"/><rect x="21" y="2" width="7" height="7" rx="1.5" fill="#fff"/><rect x="21" y="11" width="7" height="7" rx="1.5" fill="#fff"/><rect x="21" y="20" width="7" height="7" rx="1.5" fill="#fff"/></svg><svg style="position:absolute;left:1104px;top:250px;" width="32" height="24" viewBox="0 0 32 24"><rect x="2" y="1" width="10" height="5" rx="1" fill="#fff"/><rect x="15" y="1" width="14" height="5" rx="1" fill="#fff"/><rect x="2" y="9" width="16" height="5" rx="1" fill="#fff"/><rect x="21" y="9" width="8" height="5" rx="1" fill="#fff"/><rect x="2" y="17" width="27" height="5" rx="1" fill="#fff"/></svg><div style="position:absolute;left:1168px;top:242px;width:126px;height:40px;background:linear-gradient(#5c5c5c,#545454);border-radius:10px;box-shadow:0 1px 1px rgba(0,0,0,.35)"></div><div style="position:absolute;left:1231px;top:242px;width:1px;height:40px;background:#444"></div><svg style="position:absolute;left:1176px;top:246px;" width="44" height="34" viewBox="0 0 44 34"><path d="M3 23.8h12M27.600 9.200h12.400" stroke="#fff" stroke-width="2"/><path d="M15 23.800L27.600 9.200" stroke="#fff" stroke-width="2.4"/><circle cx="15" cy="23.800" r="5" fill="#fff"/><circle cx="27.600" cy="9.200" r="5" fill="#fff"/></svg><svg style="position:absolute;left:1242px;top:248px;" width="42" height="30" viewBox="0 0 42 30"><path d="M2 3c10 0 16 22 36 22V3C18 3 12 25 2 25z" fill="none" stroke="#fff" stroke-width="2.2"/></svg><div style="position:absolute;left:1312px;top:242px;width:66px;height:40px;background:#3d6fba;border-radius:10px;box-shadow:0 1px 1px rgba(0,0,0,.35)"></div><svg style="position:absolute;left:1327px;top:246px;" width="36" height="34" viewBox="0 0 36 34"><path d="M14 2h8l-1 5h-6z" fill="#fff"/><path d="M18 5v26" stroke="#fff" stroke-width="2.2"/><path d="M8 17l4 4-4 4M28 17l-4 4 4 4" fill="none" stroke="#fff" stroke-width="2"/></svg><div style="position:absolute;left:1436px;top:242px;width:170px;height:40px;background:linear-gradient(#5c5c5c,#545454);border-radius:10px;box-shadow:0 1px 1px rgba(0,0,0,.35)"></div><div style="position:absolute;left:1521px;top:242px;width:1px;height:40px;background:#444"></div><svg style="position:absolute;left:1455px;top:247px;" width="24" height="32" viewBox="0 0 24 32"><path d="M4 2v22l6-5 4 10 4-2-4-9h8z" fill="#fff"/></svg><svg style="position:absolute;left:1487px;top:258px;" width="16" height="10" viewBox="0 0 16 10"><path d="M1.5 1.5L8 8l6.5-6.5" fill="none" stroke="#a0a0a0" stroke-width="2.2"/></svg><svg style="position:absolute;left:1540px;top:248px;" width="26" height="26" viewBox="0 0 26 26"><path d="M13 2v22M2 13h22" stroke="#fff" stroke-width="2"/></svg><svg style="position:absolute;left:1574px;top:258px;" width="16" height="10" viewBox="0 0 16 10"><path d="M1.5 1.5L8 8l6.5-6.5" fill="none" stroke="#a0a0a0" stroke-width="2.2"/></svg><div style="position:absolute;left:1628.5px;top:246.5px;font-size:26px;line-height:29.9px;color:#aaaaaa;font-weight:400;letter-spacing:0px;white-space:pre;">Snap:</div><div style="position:absolute;left:1706px;top:240px;width:320px;height:40px;background:linear-gradient(#5c5c5c,#545454);border-radius:10px;box-shadow:0 1px 1px rgba(0,0,0,.35)"></div><div style="position:absolute;left:1727px;top:245.5px;font-size:26px;line-height:29.9px;color:#f2f2f2;font-weight:400;letter-spacing:0px;white-space:pre;">Smart</div><svg style="position:absolute;left:1998px;top:246px;" width="18" height="28" viewBox="0 0 18 28"><path d="M2 9l7-6 7 6M2 19l7 6 7-6" fill="none" stroke="#a8a8a8" stroke-width="2.2"/></svg><div style="position:absolute;left:2047px;top:246.5px;font-size:26px;line-height:29.9px;color:#aaaaaa;font-weight:400;letter-spacing:0px;white-space:pre;">Drag:</div><div style="position:absolute;left:2120px;top:240px;width:201px;height:40px;background:linear-gradient(#5c5c5c,#545454);border-radius:10px;box-shadow:0 1px 1px rgba(0,0,0,.35)"></div><div style="position:absolute;left:2141px;top:245.5px;font-size:26px;line-height:29.9px;color:#f2f2f2;font-weight:400;letter-spacing:0px;white-space:pre;">No Overlap</div><svg style="position:absolute;left:2293px;top:246px;" width="18" height="28" viewBox="0 0 18 28"><path d="M2 9l7-6 7 6M2 19l7 6 7-6" fill="none" stroke="#a8a8a8" stroke-width="2.2"/></svg><div style="position:absolute;left:2340px;top:240px;width:62px;height:40px;background:linear-gradient(#5c5c5c,#545454);border-radius:10px;box-shadow:0 1px 1px rgba(0,0,0,.35)"></div><svg style="position:absolute;left:2355px;top:244px;" width="32" height="32" viewBox="0 0 32 32"><path d="M4.0 12v8" stroke="#fff" stroke-width="2" stroke-linecap="round"/><path d="M8.8 9v14" stroke="#fff" stroke-width="2" stroke-linecap="round"/><path d="M13.6 6v20" stroke="#fff" stroke-width="2" stroke-linecap="round"/><path d="M18.4 2v28" stroke="#fff" stroke-width="2" stroke-linecap="round"/><path d="M23.2 6v20" stroke="#fff" stroke-width="2" stroke-linecap="round"/><path d="M28.0 9v14" stroke="#fff" stroke-width="2" stroke-linecap="round"/><path d="M32.8 12v8" stroke="#fff" stroke-width="2" stroke-linecap="round"/></svg><div style="position:absolute;left:2421px;top:240px;width:125px;height:40px;background:linear-gradient(#5c5c5c,#545454);border-radius:10px;box-shadow:0 1px 1px rgba(0,0,0,.35)"></div><div style="position:absolute;left:2483px;top:240px;width:1px;height:40px;background:#444"></div><svg style="position:absolute;left:2438px;top:244px;" width="28" height="34" viewBox="0 0 28 34"><path d="M6 3h16M6 31h16M14 3v28M9 8l5-5 5 5M9 26l5 5 5-5" fill="none" stroke="#fff" stroke-width="2"/></svg><svg style="position:absolute;left:2500px;top:248px;" width="30" height="26" viewBox="0 0 30 26"><path d="M3 3v20M27 3v20M3 13h24M8 8l-5 5 5 5M22 8l5 5-5 5" fill="none" stroke="#fff" stroke-width="2"/></svg><div style="position:absolute;left:2562px;top:240px;width:299px;height:40px;background:#444444;border-radius:10px"></div><div style="position:absolute;left:2710px;top:240px;width:2px;height:40px;background:#333"></div><svg style="position:absolute;left:2572px;top:244px;" width="22" height="32" viewBox="0 0 22 32"><path d="M11 3v26M5 9l6-6 6 6M5 23l6 6 6-6" fill="none" stroke="#c8c8c8" stroke-width="2"/></svg><div style="position:absolute;left:2606px;top:256px;width:92px;height:8px;background:#3a3a3a;border-radius:4px"></div><div style="position:absolute;left:2628px;top:248px;width:24px;height:24px;background:#a0a0a0;border-radius:50%"></div><svg style="position:absolute;left:2718px;top:248px;" width="32" height="24" viewBox="0 0 32 24"><path d="M3 12h26M9 6l-6 6 6 6M23 6l6 6-6 6" fill="none" stroke="#c8c8c8" stroke-width="2"/></svg><div style="position:absolute;left:2754px;top:256px;width:94px;height:8px;background:#3a3a3a;border-radius:4px"></div><div style="position:absolute;left:2767px;top:248px;width:24px;height:24px;background:#a0a0a0;border-radius:50%"></div><div style="position:absolute;left:480px;top:317px;width:66px;height:40px;background:linear-gradient(#5c5c5c,#545454);border-radius:10px;box-shadow:0 1px 1px rgba(0,0,0,.35)"></div><svg style="position:absolute;left:497px;top:321px;" width="32" height="32" viewBox="0 0 32 32"><path d="M16 4v24M4 16h24" stroke="#fff" stroke-width="2.4"/></svg><div style="position:absolute;left:566px;top:317px;width:66px;height:40px;background:linear-gradient(#5c5c5c,#545454);border-radius:10px;box-shadow:0 1px 1px rgba(0,0,0,.35)"></div><svg style="position:absolute;left:584px;top:321px;" width="30" height="32" viewBox="0 0 30 32"><rect x="2" y="3" width="19" height="17" rx="2" fill="none" stroke="#fff" stroke-width="2"/><rect x="8" y="9" width="19" height="17" rx="2" fill="#555" stroke="#fff" stroke-width="2"/><path d="M17.5 12v11M12 17.5h11" stroke="#fff" stroke-width="2"/></svg><div style="position:absolute;left:1024px;top:316px;width:66px;height:40px;background:linear-gradient(#5c5c5c,#545454);border-radius:10px;box-shadow:0 1px 1px rgba(0,0,0,.35)"></div><svg style="position:absolute;left:1040px;top:322px;" width="34" height="30" viewBox="0 0 34 30"><rect x="3.200" y="3.400" width="28.500" height="22.400" rx="3.500" fill="none" stroke="#fff" stroke-width="2.100"/><path d="M3.200 8.800h28.500" stroke="#fff" stroke-width="2.100"/><path d="M17 12v9.500M12 16.800l5 4.700 5-4.700" fill="none" stroke="#fff" stroke-width="2.100" stroke-linecap="round" stroke-linejoin="round"/></svg><div style="position:absolute;left:460px;top:374px;width:650px;height:1274px;background:#565656"></div><div style="position:absolute;left:460px;top:374px;width:650px;height:96px;background:#747474"></div><div style="position:absolute;left:460px;top:374px;width:40px;height:96px;background:#6f6f6f"></div><div style="position:absolute;left:500px;top:374px;width:2px;height:96px;background:#555555"></div><div style="position:absolute;left:460px;top:470px;width:650px;height:2px;background:#474747"></div><div style="position:absolute;left:462.0px;width:40px;text-align:center;top:408.5px;font-size:26px;line-height:29.9px;color:#fff;font-weight:400;letter-spacing:0px;white-space:pre">1</div><div style="position:absolute;left:524px;top:400px;width:60px;height:44px;background:radial-gradient(ellipse at 50% 50%,#354661,#263246);border-radius:5px;box-shadow:0 1px 1px rgba(0,0,0,.5)"></div><svg style="position:absolute;left:530px;top:405px;" width="48" height="34" viewBox="0 0 48 34"><path d="M3.0 15v4" stroke="#66b3f6" stroke-width="1.8"/><path d="M7.0 13v8" stroke="#66b3f6" stroke-width="1.8"/><path d="M11.0 14v6" stroke="#66b3f6" stroke-width="1.8"/><path d="M15.0 10v14" stroke="#66b3f6" stroke-width="1.8"/><path d="M19.0 12v10" stroke="#66b3f6" stroke-width="1.8"/><path d="M23.0 8v18" stroke="#66b3f6" stroke-width="1.8"/><path d="M27.0 2v30" stroke="#66b3f6" stroke-width="1.8"/><path d="M31.0 8v18" stroke="#66b3f6" stroke-width="1.8"/><path d="M35.0 12v10" stroke="#66b3f6" stroke-width="1.8"/><path d="M39.0 10v14" stroke="#66b3f6" stroke-width="1.8"/><path d="M43.0 14v6" stroke="#66b3f6" stroke-width="1.8"/><path d="M47.0 13v8" stroke="#66b3f6" stroke-width="1.8"/><path d="M51.0 15v4" stroke="#66b3f6" stroke-width="1.8"/></svg><div style="position:absolute;left:603px;top:384.5px;font-size:26px;line-height:29.9px;color:#fafafa;font-weight:400;letter-spacing:0px;white-space:pre;">INST</div><div style="position:absolute;left:604px;top:426px;width:82px;height:33px;background:#7f7f7f;border-radius:8px;box-shadow:0 1px 1px rgba(0,0,0,.3)"></div><div style="position:absolute;left:645px;top:426px;width:1px;height:33px;background:#5a5a5a"></div><div style="position:absolute;left:698px;top:426px;width:82px;height:33px;background:#7f7f7f;border-radius:8px;box-shadow:0 1px 1px rgba(0,0,0,.3)"></div><div style="position:absolute;left:739px;top:426px;width:1px;height:33px;background:#5a5a5a"></div><div style="position:absolute;left:604.5px;width:40px;text-align:center;top:431.2px;font-size:23px;line-height:26.4px;color:#fff;font-weight:400;letter-spacing:0px;white-space:pre">M</div><div style="position:absolute;left:645.5px;width:40px;text-align:center;top:431.2px;font-size:23px;line-height:26.4px;color:#fff;font-weight:400;letter-spacing:0px;white-space:pre">S</div><div style="position:absolute;left:698.5px;width:40px;text-align:center;top:431.2px;font-size:23px;line-height:26.4px;color:#c42a1c;font-weight:400;letter-spacing:0px;white-space:pre">R</div><div style="position:absolute;left:739.5px;width:40px;text-align:center;top:431.2px;font-size:23px;line-height:26.4px;color:#fff;font-weight:400;letter-spacing:0px;white-space:pre">I</div><div style="position:absolute;left:792px;top:424px;width:232px;height:35px;background:#3c3c3c;border-radius:18px"></div><div style="position:absolute;left:940px;top:425px;width:33px;height:33px;background:#a3a3a3;border-radius:50%;box-shadow:0 1px 2px rgba(0,0,0,.35)"></div><svg style="position:absolute;left:1037px;top:415.4px;" width="52" height="52" viewBox="0 0 52 52"><path d="M15.5 44.2A21 21 0 1 1 36.5 44.2" fill="none" stroke="#3b3b3b" stroke-width="8"/><circle cx="26" cy="26" r="17" fill="#a3a3a3"/><rect x="25" y="11" width="2.2" height="7" rx="1" fill="#111"/><rect x="25" y="5" width="2" height="5" fill="#6fd86f"/></svg><div style="position:absolute;left:460px;top:472px;width:650px;height:96px;background:#595959"></div><div style="position:absolute;left:460px;top:472px;width:40px;height:96px;background:#555555"></div><div style="position:absolute;left:500px;top:472px;width:2px;height:96px;background:#4a4a4a"></div><div style="position:absolute;left:460px;top:568px;width:650px;height:2px;background:#474747"></div><div style="position:absolute;left:462.0px;width:40px;text-align:center;top:506.5px;font-size:26px;line-height:29.9px;color:#fff;font-weight:400;letter-spacing:0px;white-space:pre">2</div><div style="position:absolute;left:524px;top:498px;width:60px;height:44px;background:radial-gradient(ellipse at 50% 50%,#354661,#263246);border-radius:5px;box-shadow:0 1px 1px rgba(0,0,0,.5)"></div><svg style="position:absolute;left:530px;top:503px;" width="48" height="34" viewBox="0 0 48 34"><path d="M3.0 15v4" stroke="#66b3f6" stroke-width="1.8"/><path d="M7.0 13v8" stroke="#66b3f6" stroke-width="1.8"/><path d="M11.0 14v6" stroke="#66b3f6" stroke-width="1.8"/><path d="M15.0 10v14" stroke="#66b3f6" stroke-width="1.8"/><path d="M19.0 12v10" stroke="#66b3f6" stroke-width="1.8"/><path d="M23.0 8v18" stroke="#66b3f6" stroke-width="1.8"/><path d="M27.0 2v30" stroke="#66b3f6" stroke-width="1.8"/><path d="M31.0 8v18" stroke="#66b3f6" stroke-width="1.8"/><path d="M35.0 12v10" stroke="#66b3f6" stroke-width="1.8"/><path d="M39.0 10v14" stroke="#66b3f6" stroke-width="1.8"/><path d="M43.0 14v6" stroke="#66b3f6" stroke-width="1.8"/><path d="M47.0 13v8" stroke="#66b3f6" stroke-width="1.8"/><path d="M51.0 15v4" stroke="#66b3f6" stroke-width="1.8"/></svg><div style="position:absolute;left:603px;top:482.5px;font-size:26px;line-height:29.9px;color:#fafafa;font-weight:400;letter-spacing:0px;white-space:pre;">VOCAL rec</div><div style="position:absolute;left:604px;top:524px;width:82px;height:33px;background:#686868;border-radius:8px;box-shadow:0 1px 1px rgba(0,0,0,.3)"></div><div style="position:absolute;left:645px;top:524px;width:1px;height:33px;background:#5a5a5a"></div><div style="position:absolute;left:698px;top:524px;width:82px;height:33px;background:#686868;border-radius:8px;box-shadow:0 1px 1px rgba(0,0,0,.3)"></div><div style="position:absolute;left:739px;top:524px;width:1px;height:33px;background:#5a5a5a"></div><div style="position:absolute;left:604.5px;width:40px;text-align:center;top:529.2px;font-size:23px;line-height:26.4px;color:#fff;font-weight:400;letter-spacing:0px;white-space:pre">M</div><div style="position:absolute;left:645.5px;width:40px;text-align:center;top:529.2px;font-size:23px;line-height:26.4px;color:#fff;font-weight:400;letter-spacing:0px;white-space:pre">S</div><div style="position:absolute;left:698.5px;width:40px;text-align:center;top:529.2px;font-size:23px;line-height:26.4px;color:#fff;font-weight:400;letter-spacing:0px;white-space:pre">R</div><div style="position:absolute;left:739.5px;width:40px;text-align:center;top:529.2px;font-size:23px;line-height:26.4px;color:#fff;font-weight:400;letter-spacing:0px;white-space:pre">I</div><div style="position:absolute;left:792px;top:522px;width:232px;height:35px;background:#3c3c3c;border-radius:18px"></div><div style="position:absolute;left:940px;top:523px;width:33px;height:33px;background:#8c8c8c;border-radius:50%;box-shadow:0 1px 2px rgba(0,0,0,.35)"></div><svg style="position:absolute;left:1037px;top:513.4px;" width="52" height="52" viewBox="0 0 52 52"><path d="M15.5 44.2A21 21 0 1 1 36.5 44.2" fill="none" stroke="#3b3b3b" stroke-width="8"/><circle cx="26" cy="26" r="17" fill="#8c8c8c"/><rect x="25" y="11" width="2.2" height="7" rx="1" fill="#111"/><rect x="25" y="5" width="2" height="5" fill="#6fd86f"/></svg><div style="position:absolute;left:1110px;top:298px;width:1740px;height:1350px;background:#3a3a3a"></div><div style="position:absolute;left:2850px;top:298px;width:29px;height:1378px;background:#3a3a3a"></div><div style="position:absolute;left:2851px;top:298px;width:1px;height:1378px;background:#333"></div><div style="position:absolute;left:2850px;top:374px;width:27px;height:1px;background:#2c2c2c"></div><div style="position:absolute;left:1110px;top:298px;width:18px;height:76px;background:#3c3c3c"></div><div style="position:absolute;left:1110px;top:298px;width:1767px;height:2px;background:#363636"></div><div style="position:absolute;left:1128px;top:300px;width:1722px;height:36px;background:#353535"></div><div style="position:absolute;left:1128px;top:300px;width:385px;height:36px;background:#5a5a5a"></div><div style="position:absolute;left:1128px;top:336px;width:1722px;height:2px;background:#262626"></div><div style="position:absolute;left:1128px;top:338px;width:1722px;height:36px;background:#333333"></div><svg style="position:absolute;left:1110px;top:301px;" width="18" height="30" viewBox="0 0 18 30"><path d="M1 2l16 13L1 28z" fill="#4e4e4e"/></svg><svg style="position:absolute;left:1128px;top:298px;" width="1722" height="76" viewBox="0 0 1722 76"><rect x="0.5" y="6" width="2" height="70" fill="#777"/><rect x="24.5" y="60" width="2" height="16" fill="#6a6a6a"/><rect x="48.5" y="60" width="2" height="16" fill="#6a6a6a"/><rect x="72.5" y="60" width="2" height="16" fill="#6a6a6a"/><rect x="96.5" y="42" width="2" height="34" fill="#6e6e6e"/><rect x="120.5" y="60" width="2" height="16" fill="#6a6a6a"/><rect x="144.5" y="60" width="2" height="16" fill="#6a6a6a"/><rect x="168.5" y="60" width="2" height="16" fill="#6a6a6a"/><rect x="192.5" y="6" width="2" height="70" fill="#777"/><rect x="216.5" y="60" width="2" height="16" fill="#6a6a6a"/><rect x="240.5" y="60" width="2" height="16" fill="#6a6a6a"/><rect x="264.5" y="60" width="2" height="16" fill="#6a6a6a"/><rect x="288.5" y="42" width="2" height="34" fill="#6e6e6e"/><rect x="312.5" y="60" width="2" height="16" fill="#6a6a6a"/><rect x="336.5" y="60" width="2" height="16" fill="#6a6a6a"/><rect x="360.5" y="60" width="2" height="16" fill="#6a6a6a"/><rect x="384.5" y="6" width="2" height="70" fill="#777"/><rect x="408.5" y="60" width="2" height="16" fill="#6a6a6a"/><rect x="432.5" y="60" width="2" height="16" fill="#6a6a6a"/><rect x="456.5" y="60" width="2" height="16" fill="#6a6a6a"/><rect x="480.5" y="42" width="2" height="34" fill="#6e6e6e"/><rect x="504.5" y="60" width="2" height="16" fill="#6a6a6a"/><rect x="528.5" y="60" width="2" height="16" fill="#6a6a6a"/><rect x="552.5" y="60" width="2" height="16" fill="#6a6a6a"/><rect x="576.5" y="6" width="2" height="70" fill="#777"/><rect x="600.5" y="60" width="2" height="16" fill="#6a6a6a"/><rect x="624.5" y="60" width="2" height="16" fill="#6a6a6a"/><rect x="648.5" y="60" width="2" height="16" fill="#6a6a6a"/><rect x="672.5" y="42" width="2" height="34" fill="#6e6e6e"/><rect x="696.5" y="60" width="2" height="16" fill="#6a6a6a"/><rect x="720.5" y="60" width="2" height="16" fill="#6a6a6a"/><rect x="744.5" y="60" width="2" height="16" fill="#6a6a6a"/><rect x="768.5" y="6" width="2" height="70" fill="#777"/><rect x="792.5" y="60" width="2" height="16" fill="#6a6a6a"/><rect x="816.5" y="60" width="2" height="16" fill="#6a6a6a"/><rect x="840.5" y="60" width="2" height="16" fill="#6a6a6a"/><rect x="864.5" y="42" width="2" height="34" fill="#6e6e6e"/><rect x="888.5" y="60" width="2" height="16" fill="#6a6a6a"/><rect x="912.5" y="60" width="2" height="16" fill="#6a6a6a"/><rect x="936.5" y="60" width="2" height="16" fill="#6a6a6a"/><rect x="960.5" y="6" width="2" height="70" fill="#777"/><rect x="984.5" y="60" width="2" height="16" fill="#6a6a6a"/><rect x="1008.5" y="60" width="2" height="16" fill="#6a6a6a"/><rect x="1032.5" y="60" width="2" height="16" fill="#6a6a6a"/><rect x="1056.5" y="42" width="2" height="34" fill="#6e6e6e"/><rect x="1080.5" y="60" width="2" height="16" fill="#6a6a6a"/><rect x="1104.5" y="60" width="2" height="16" fill="#6a6a6a"/><rect x="1128.5" y="60" width="2" height="16" fill="#6a6a6a"/><rect x="1152.5" y="6" width="2" height="70" fill="#777"/><rect x="1176.5" y="60" width="2" height="16" fill="#6a6a6a"/><rect x="1200.5" y="60" width="2" height="16" fill="#6a6a6a"/><rect x="1224.5" y="60" width="2" height="16" fill="#6a6a6a"/><rect x="1248.5" y="42" width="2" height="34" fill="#6e6e6e"/><rect x="1272.5" y="60" width="2" height="16" fill="#6a6a6a"/><rect x="1296.5" y="60" width="2" height="16" fill="#6a6a6a"/><rect x="1320.5" y="60" width="2" height="16" fill="#6a6a6a"/><rect x="1344.5" y="6" width="2" height="70" fill="#777"/><rect x="1368.5" y="60" width="2" height="16" fill="#6a6a6a"/><rect x="1392.5" y="60" width="2" height="16" fill="#6a6a6a"/><rect x="1416.5" y="60" width="2" height="16" fill="#6a6a6a"/><rect x="1440.5" y="42" width="2" height="34" fill="#6e6e6e"/><rect x="1464.5" y="60" width="2" height="16" fill="#6a6a6a"/><rect x="1488.5" y="60" width="2" height="16" fill="#6a6a6a"/><rect x="1512.5" y="60" width="2" height="16" fill="#6a6a6a"/><rect x="1536.5" y="6" width="2" height="70" fill="#777"/><rect x="1560.5" y="60" width="2" height="16" fill="#6a6a6a"/><rect x="1584.5" y="60" width="2" height="16" fill="#6a6a6a"/><rect x="1608.5" y="60" width="2" height="16" fill="#6a6a6a"/><rect x="1632.5" y="42" width="2" height="34" fill="#6e6e6e"/><rect x="1656.5" y="60" width="2" height="16" fill="#6a6a6a"/><rect x="1680.5" y="60" width="2" height="16" fill="#6a6a6a"/><rect x="1704.5" y="60" width="2" height="16" fill="#6a6a6a"/></svg><div style="position:absolute;left:1135.5px;top:299.6px;font-size:27px;line-height:31.0px;color:#dcdcdc;font-weight:400;letter-spacing:0px;white-space:pre;">1</div><div style="position:absolute;left:1327.5px;top:299.6px;font-size:27px;line-height:31.0px;color:#dcdcdc;font-weight:400;letter-spacing:0px;white-space:pre;">3</div><div style="position:absolute;left:1519.5px;top:299.6px;font-size:27px;line-height:31.0px;color:#dcdcdc;font-weight:400;letter-spacing:0px;white-space:pre;">5</div><div style="position:absolute;left:1711.5px;top:299.6px;font-size:27px;line-height:31.0px;color:#dcdcdc;font-weight:400;letter-spacing:0px;white-space:pre;">7</div><div style="position:absolute;left:1903.5px;top:299.6px;font-size:27px;line-height:31.0px;color:#dcdcdc;font-weight:400;letter-spacing:0px;white-space:pre;">9</div><div style="position:absolute;left:2095.5px;top:299.6px;font-size:27px;line-height:31.0px;color:#dcdcdc;font-weight:400;letter-spacing:0px;white-space:pre;">11</div><div style="position:absolute;left:2287.5px;top:299.6px;font-size:27px;line-height:31.0px;color:#dcdcdc;font-weight:400;letter-spacing:0px;white-space:pre;">13</div><div style="position:absolute;left:2479.5px;top:299.6px;font-size:27px;line-height:31.0px;color:#dcdcdc;font-weight:400;letter-spacing:0px;white-space:pre;">15</div><div style="position:absolute;left:2671.5px;top:299.6px;font-size:27px;line-height:31.0px;color:#dcdcdc;font-weight:400;letter-spacing:0px;white-space:pre;">17</div><svg style="position:absolute;left:1128px;top:470px;" width="1722" height="98" viewBox="0 0 1722 98"><rect x="96" y="0" width="2" height="98" fill="#4a4a4a"/><rect x="192" y="0" width="2" height="98" fill="#4a4a4a"/><rect x="288" y="0" width="2" height="98" fill="#4a4a4a"/><rect x="384" y="0" width="2" height="98" fill="#4a4a4a"/><rect x="480" y="0" width="2" height="98" fill="#4a4a4a"/><rect x="576" y="0" width="2" height="98" fill="#4a4a4a"/><rect x="672" y="0" width="2" height="98" fill="#4a4a4a"/><rect x="768" y="0" width="2" height="98" fill="#4a4a4a"/><rect x="864" y="0" width="2" height="98" fill="#4a4a4a"/><rect x="960" y="0" width="2" height="98" fill="#4a4a4a"/><rect x="1056" y="0" width="2" height="98" fill="#4a4a4a"/><rect x="1152" y="0" width="2" height="98" fill="#4a4a4a"/><rect x="1248" y="0" width="2" height="98" fill="#4a4a4a"/><rect x="1344" y="0" width="2" height="98" fill="#4a4a4a"/><rect x="1440" y="0" width="2" height="98" fill="#4a4a4a"/><rect x="1536" y="0" width="2" height="98" fill="#4a4a4a"/><rect x="1632" y="0" width="2" height="98" fill="#4a4a4a"/></svg><div style="position:absolute;left:1110px;top:568px;width:1740px;height:2px;background:#2e2e2e"></div><div style="position:absolute;left:1110px;top:470px;width:1740px;height:2px;background:#2e2e2e"></div><div style="position:absolute;left:1128px;top:372px;width:1722px;height:100px;overflow:hidden"><div style="position:absolute;left:1px;top:2px;width:1740px;height:96px;background:#0c0c0c;border-radius:8px"></div><div style="position:absolute;left:3px;top:4px;width:1740px;height:92px;background:#4259a7;border-radius:7px;overflow:hidden"><div style="position:absolute;left:0;top:0;width:100%;height:36px;background:#d2dcf8"></div><div style="position:absolute;left:0;bottom:0;width:100%;height:2px;background:#c9d4f5"></div></div></div><div style="position:absolute;left:1140.5px;top:381.3px;font-size:22.3px;line-height:25.6px;color:#1f2f6e;font-weight:400;letter-spacing:0.45px;white-space:pre;">Charlie Puth_That’s Hilarious Inst</div><svg style="position:absolute;left:1500px;top:384px;" width="30" height="22" viewBox="0 0 30 22"><circle cx="10" cy="11" r="8" fill="none" stroke="#1f2f6e" stroke-width="2"/><circle cx="19" cy="11" r="8" fill="none" stroke="#1f2f6e" stroke-width="2"/></svg><svg style="position:absolute;left:1128px;top:372px;" width="1722" height="100" viewBox="0 0 1722 100"><polygon points="4,65 6,65 6,65 8,65 8,65 10,65 10,65 12,65 12,65 14,65 14,60 16,60 16,56 18,56 18,57 20,57 20,60 22,60 22,60 24,60 24,59 26,59 26,61 28,61 28,62 30,62 30,58 32,58 32,61 34,61 34,62 36,62 36,63 38,63 38,62 40,62 40,63 42,63 42,64 44,64 44,62 46,62 46,62 48,62 48,59 50,59 50,62 52,62 52,59 54,59 54,60 56,60 56,63 58,63 58,63 60,63 60,61 62,61 62,62 64,62 64,62 66,62 66,57 68,57 68,61 70,61 70,61 72,61 72,60 74,60 74,61 76,61 76,62 78,62 78,59 80,59 80,60 82,60 82,62 84,62 84,63 86,63 86,63 88,63 88,63 90,63 90,65 92,65 92,64 94,64 94,63 96,63 96,65 98,65 98,65 100,65 100,65 102,65 102,65 104,65 104,65 106,65 106,65 108,65 108,65 110,65 110,65 112,65 112,65 114,65 114,65 116,65 116,65 118,65 118,65 120,65 120,65 122,65 122,62 124,62 124,62 126,62 126,60 128,60 128,62 130,62 130,62 132,62 132,60 134,60 134,60 136,60 136,62 138,62 138,60 140,60 140,63 142,63 142,61 144,61 144,63 146,63 146,63 148,63 148,64 150,64 150,64 152,64 152,63 154,63 154,62 156,62 156,63 158,63 158,64 160,64 160,64 162,64 162,63 164,63 164,63 166,63 166,62 168,62 168,63 170,63 170,61 172,61 172,61 174,61 174,65 176,65 176,65 178,65 178,65 180,65 180,65 182,65 182,65 184,65 184,63 186,63 186,63 188,63 188,63 190,63 190,63 192,63 192,63 194,63 194,63 196,63 196,64 198,64 198,64 200,64 200,64 202,64 202,63 204,63 204,64 206,64 206,65 208,65 208,65 210,65 210,64 212,64 212,64 214,64 214,65 216,65 216,65 218,65 218,65 220,65 220,65 222,65 222,65 224,65 224,65 226,65 226,64 228,64 228,59 230,59 230,59 232,59 232,55 234,55 234,59 236,59 236,58 238,58 238,58 240,58 240,59 242,59 242,56 244,56 244,58 246,58 246,58 248,58 248,54 250,54 250,60 252,60 252,60 254,60 254,60 256,60 256,61 258,61 258,59 260,59 260,57 262,57 262,61 264,61 264,63 266,63 266,64 268,64 268,62 270,62 270,62 272,62 272,61 274,61 274,64 276,64 276,62 278,62 278,62 280,62 280,62 282,62 282,63 284,63 284,63 286,63 286,61 288,61 288,60 290,60 290,60 292,60 292,62 294,62 294,59 296,59 296,60 298,60 298,59 300,59 300,59 302,59 302,61 304,61 304,59 306,59 306,60 308,60 308,64 310,64 310,65 312,65 312,65 314,65 314,65 316,65 316,65 318,65 318,65 320,65 320,65 322,65 322,65 324,65 324,65 326,65 326,65 328,65 328,65 330,65 330,65 332,65 332,65 334,65 334,65 336,65 336,64 338,64 338,63 340,63 340,62 342,62 342,62 344,62 344,61 346,61 346,62 348,62 348,61 350,61 350,62 352,62 352,61 354,61 354,61 356,61 356,61 358,61 358,60 360,60 360,61 362,61 362,62 364,62 364,61 366,61 366,62 368,62 368,60 370,60 370,63 372,63 372,61 374,61 374,61 376,61 376,63 378,63 378,61 380,61 380,59 382,59 382,63 384,63 384,63 386,63 386,63 388,63 388,63 390,63 390,63 392,63 392,61 394,61 394,61 396,61 396,61 398,61 398,61 400,61 400,61 402,61 402,60 404,60 404,59 406,59 406,61 408,61 408,60 410,60 410,59 412,59 412,60 414,60 414,60 416,60 416,59 418,59 418,60 420,60 420,59 422,59 422,61 424,61 424,59 426,59 426,61 428,61 428,62 430,62 430,62 432,62 432,62 434,62 434,63 436,63 436,61 438,61 438,61 440,61 440,60 442,60 442,61 444,61 444,63 446,63 446,63 448,63 448,61 450,61 450,61 452,61 452,63 454,63 454,63 456,63 456,63 458,63 458,60 460,60 460,62 462,62 462,62 464,62 464,60 466,60 466,60 468,60 468,60 470,60 470,62 472,62 472,61 474,61 474,60 476,60 476,61 478,61 478,62 480,62 480,60 482,60 482,61 484,61 484,61 486,61 486,63 488,63 488,64 490,64 490,65 492,65 492,64 494,64 494,65 496,65 496,64 498,64 498,64 500,64 500,65 502,65 502,63 504,63 504,60 506,60 506,64 508,64 508,61 510,61 510,63 512,63 512,64 514,64 514,63 516,63 516,62 518,62 518,61 520,61 520,61 522,61 522,61 524,61 524,62 526,62 526,65 528,65 528,65 530,65 530,65 532,65 532,65 534,65 534,65 536,65 536,65 538,65 538,65 540,65 540,65 542,65 542,65 544,65 544,65 546,65 546,63 548,63 548,64 550,64 550,64 552,64 552,62 554,62 554,63 556,63 556,64 558,64 558,65 560,65 560,62 562,62 562,63 564,63 564,64 566,64 566,62 568,62 568,62 570,62 570,60 572,60 572,60 574,60 574,61 576,61 576,56 578,56 578,59 580,59 580,59 582,59 582,60 584,60 584,60 586,60 586,58 588,58 588,60 590,60 590,58 592,58 592,60 594,60 594,59 596,59 596,60 598,60 598,59 600,59 600,60 602,60 602,57 604,57 604,65 606,65 606,65 608,65 608,65 610,65 610,65 612,65 612,65 614,65 614,65 616,65 616,65 618,65 618,65 620,65 620,65 622,65 622,64 624,64 624,64 626,64 626,65 628,65 628,65 630,65 630,64 632,64 632,65 634,65 634,65 636,65 636,64 638,64 638,60 640,60 640,59 642,59 642,59 644,59 644,60 646,60 646,58 648,58 648,59 650,59 650,59 652,59 652,60 654,60 654,61 656,61 656,61 658,61 658,62 660,62 660,63 662,63 662,59 664,59 664,62 666,62 666,64 668,64 668,59 670,59 670,62 672,62 672,64 674,64 674,63 676,63 676,64 678,64 678,60 680,60 680,63 682,63 682,61 684,61 684,64 686,64 686,63 688,63 688,61 690,61 690,63 692,63 692,63 694,63 694,62 696,62 696,62 698,62 698,61 700,61 700,62 702,62 702,61 704,61 704,60 706,60 706,62 708,62 708,62 710,62 710,62 712,62 712,63 714,63 714,62 716,62 716,62 718,62 718,62 720,62 720,63 722,63 722,65 724,65 724,65 726,65 726,65 728,65 728,63 730,63 730,65 732,65 732,64 734,64 734,63 736,63 736,65 738,65 738,62 740,62 740,63 742,63 742,62 744,62 744,62 746,62 746,63 748,63 748,61 750,61 750,61 752,61 752,62 754,62 754,57 756,57 756,61 758,61 758,62 760,62 760,60 762,60 762,61 764,61 764,61 766,61 766,61 768,61 768,62 770,62 770,62 772,62 772,60 774,60 774,62 776,62 776,61 778,61 778,63 780,63 780,62 782,62 782,62 784,62 784,62 786,62 786,59 788,59 788,63 790,63 790,62 792,62 792,57 794,57 794,60 796,60 796,57 798,57 798,60 800,60 800,61 802,61 802,65 804,65 804,65 806,65 806,65 808,65 808,65 810,65 810,65 812,65 812,65 814,65 814,65 816,65 816,59 818,59 818,60 820,60 820,59 822,59 822,60 824,60 824,60 826,60 826,61 828,61 828,61 830,61 830,63 832,63 832,61 834,61 834,61 836,61 836,63 838,63 838,63 840,63 840,62 842,62 842,63 844,63 844,63 846,63 846,63 848,63 848,62 850,62 850,62 852,62 852,63 854,63 854,59 856,59 856,58 858,58 858,63 860,63 860,61 862,61 862,61 864,61 864,61 866,61 866,60 868,60 868,60 870,60 870,60 872,60 872,61 874,61 874,58 876,58 876,62 878,62 878,57 880,57 880,61 882,61 882,62 884,62 884,60 886,60 886,64 888,64 888,64 890,64 890,60 892,60 892,63 894,63 894,64 896,64 896,65 898,65 898,65 900,65 900,65 902,65 902,64 904,64 904,64 906,64 906,64 908,64 908,64 910,64 910,61 912,61 912,63 914,63 914,62 916,62 916,63 918,63 918,62 920,62 920,64 922,64 922,58 924,58 924,61 926,61 926,61 928,61 928,62 930,62 930,63 932,63 932,62 934,62 934,63 936,63 936,63 938,63 938,62 940,62 940,63 942,63 942,64 944,64 944,63 946,63 946,62 948,62 948,63 950,63 950,61 952,61 952,65 954,65 954,65 956,65 956,65 958,65 958,65 960,65 960,65 962,65 962,65 964,65 964,65 966,65 966,65 968,65 968,65 970,65 970,65 972,65 972,65 974,65 974,61 976,61 976,61 978,61 978,61 980,61 980,62 982,62 982,61 984,61 984,60 986,60 986,62 988,62 988,61 990,61 990,61 992,61 992,62 994,62 994,61 996,61 996,61 998,61 998,63 1000,63 1000,62 1002,62 1002,63 1004,63 1004,62 1006,62 1006,62 1008,62 1008,64 1010,64 1010,62 1012,62 1012,64 1014,64 1014,63 1016,63 1016,63 1018,63 1018,62 1020,62 1020,63 1022,63 1022,62 1024,62 1024,65 1026,65 1026,65 1028,65 1028,64 1030,64 1030,64 1032,64 1032,64 1034,64 1034,64 1036,64 1036,64 1038,64 1038,64 1040,64 1040,64 1042,64 1042,64 1044,64 1044,64 1046,64 1046,64 1048,64 1048,64 1050,64 1050,64 1052,64 1052,64 1054,64 1054,64 1056,64 1056,64 1058,64 1058,65 1060,65 1060,65 1062,65 1062,65 1064,65 1064,65 1066,65 1066,65 1068,65 1068,65 1070,65 1070,65 1072,65 1072,64 1074,64 1074,64 1076,64 1076,65 1078,65 1078,56 1080,56 1080,62 1082,62 1082,62 1084,62 1084,62 1086,62 1086,60 1088,60 1088,59 1090,59 1090,59 1092,59 1092,60 1094,60 1094,54 1096,54 1096,58 1098,58 1098,59 1100,59 1100,55 1102,55 1102,58 1104,58 1104,59 1106,59 1106,60 1108,60 1108,60 1110,60 1110,61 1112,61 1112,62 1114,62 1114,60 1116,60 1116,62 1118,62 1118,63 1120,63 1120,65 1122,65 1122,63 1124,63 1124,64 1126,64 1126,64 1128,64 1128,60 1130,60 1130,62 1132,62 1132,64 1134,64 1134,65 1136,65 1136,65 1138,65 1138,64 1140,64 1140,63 1142,63 1142,61 1144,61 1144,60 1146,60 1146,60 1148,60 1148,59 1150,59 1150,60 1152,60 1152,59 1154,59 1154,60 1156,60 1156,60 1158,60 1158,65 1160,65 1160,65 1162,65 1162,65 1164,65 1164,65 1166,65 1166,65 1168,65 1168,65 1170,65 1170,65 1172,65 1172,65 1174,65 1174,65 1176,65 1176,65 1178,65 1178,65 1180,65 1180,65 1182,65 1182,65 1184,65 1184,65 1186,65 1186,65 1188,65 1188,63 1190,63 1190,63 1192,63 1192,63 1194,63 1194,62 1196,62 1196,60 1198,60 1198,61 1200,61 1200,62 1202,62 1202,62 1204,62 1204,62 1206,62 1206,62 1208,62 1208,58 1210,58 1210,60 1212,60 1212,61 1214,61 1214,60 1216,60 1216,62 1218,62 1218,61 1220,61 1220,60 1222,60 1222,60 1224,60 1224,61 1226,61 1226,61 1228,61 1228,62 1230,62 1230,62 1232,62 1232,62 1234,62 1234,63 1236,63 1236,63 1238,63 1238,63 1240,63 1240,64 1242,64 1242,62 1244,62 1244,62 1246,62 1246,63 1248,63 1248,63 1250,63 1250,62 1252,62 1252,63 1254,63 1254,62 1256,62 1256,63 1258,63 1258,62 1260,62 1260,62 1262,62 1262,62 1264,62 1264,62 1266,62 1266,62 1268,62 1268,60 1270,60 1270,59 1272,59 1272,61 1274,61 1274,61 1276,61 1276,63 1278,63 1278,62 1280,62 1280,64 1282,64 1282,64 1284,64 1284,64 1286,64 1286,64 1288,64 1288,64 1290,64 1290,62 1292,62 1292,65 1294,65 1294,58 1296,58 1296,59 1298,59 1298,58 1300,58 1300,59 1302,59 1302,64 1304,64 1304,58 1306,58 1306,59 1308,59 1308,57 1310,57 1310,62 1312,62 1312,60 1314,60 1314,59 1316,59 1316,54 1318,54 1318,59 1320,59 1320,55 1322,55 1322,54 1324,54 1324,57 1326,57 1326,57 1328,57 1328,55 1330,55 1330,55 1332,55 1332,51 1334,51 1334,52 1336,52 1336,56 1338,56 1338,53 1340,53 1340,56 1342,56 1342,61 1344,61 1344,60 1346,60 1346,61 1348,61 1348,61 1350,61 1350,61 1352,61 1352,62 1354,62 1354,58 1356,58 1356,61 1358,61 1358,60 1360,60 1360,60 1362,60 1362,60 1364,60 1364,56 1366,56 1366,59 1368,59 1368,58 1370,58 1370,53 1372,53 1372,55 1374,55 1374,55 1376,55 1376,51 1378,51 1378,50 1380,50 1380,53 1382,53 1382,50 1384,50 1384,54 1386,54 1386,53 1388,53 1388,51 1390,51 1390,53 1392,53 1392,53 1394,53 1394,51 1396,51 1396,54 1398,54 1398,52 1400,52 1400,55 1402,55 1402,54 1404,54 1404,58 1406,58 1406,54 1408,54 1408,55 1410,55 1410,60 1412,60 1412,56 1414,56 1414,55 1416,55 1416,59 1418,59 1418,56 1420,56 1420,55 1422,55 1422,55 1424,55 1424,57 1426,57 1426,56 1428,56 1428,56 1430,56 1430,55 1432,55 1432,53 1434,53 1434,50 1436,50 1436,52 1438,52 1438,49 1440,49 1440,49 1442,49 1442,48 1444,48 1444,53 1446,53 1446,50 1448,50 1448,52 1450,52 1450,55 1452,55 1452,47 1454,47 1454,52 1456,52 1456,56 1458,56 1458,52 1460,52 1460,54 1462,54 1462,58 1464,58 1464,55 1466,55 1466,57 1468,57 1468,52 1470,52 1470,60 1472,60 1472,61 1474,61 1474,62 1476,62 1476,58 1478,58 1478,60 1480,60 1480,56 1482,56 1482,60 1484,60 1484,58 1486,58 1486,59 1488,59 1488,57 1490,57 1490,54 1492,54 1492,54 1494,54 1494,53 1496,53 1496,53 1498,53 1498,56 1500,56 1500,52 1502,52 1502,54 1504,54 1504,52 1506,52 1506,57 1508,57 1508,54 1510,54 1510,51 1512,51 1512,57 1514,57 1514,55 1516,55 1516,58 1518,58 1518,58 1520,58 1520,58 1522,58 1522,58 1524,58 1524,61 1526,61 1526,61 1528,61 1528,58 1530,58 1530,57 1532,57 1532,60 1534,60 1534,63 1536,63 1536,62 1538,62 1538,55 1540,55 1540,56 1542,56 1542,52 1544,52 1544,49 1546,49 1546,56 1548,56 1548,56 1550,56 1550,55 1552,55 1552,54 1554,54 1554,55 1556,55 1556,50 1558,50 1558,52 1560,52 1560,51 1562,51 1562,54 1564,54 1564,50 1566,50 1566,54 1568,54 1568,57 1570,57 1570,57 1572,57 1572,56 1574,56 1574,52 1576,52 1576,55 1578,55 1578,50 1580,50 1580,59 1582,59 1582,60 1584,60 1584,60 1586,60 1586,58 1588,58 1588,59 1590,59 1590,58 1592,58 1592,59 1594,59 1594,56 1596,56 1596,53 1598,53 1598,50 1600,50 1600,52 1602,52 1602,51 1604,51 1604,48 1606,48 1606,49 1608,49 1608,45 1610,45 1610,46 1612,46 1612,40 1614,40 1614,44 1616,44 1616,49 1618,49 1618,45 1620,45 1620,46 1622,46 1622,50 1624,50 1624,49 1626,49 1626,52 1628,52 1628,50 1630,50 1630,54 1632,54 1632,50 1634,50 1634,54 1636,54 1636,56 1638,56 1638,52 1640,52 1640,55 1642,55 1642,55 1644,55 1644,53 1646,53 1646,55 1648,55 1648,49 1650,49 1650,52 1652,52 1652,50 1654,50 1654,55 1656,55 1656,52 1658,52 1658,49 1660,49 1660,48 1662,48 1662,46 1664,46 1664,50 1666,50 1666,47 1668,47 1668,38 1670,38 1670,49 1672,49 1672,49 1674,49 1674,49 1676,49 1676,50 1678,50 1678,48 1680,48 1680,55 1682,55 1682,43 1684,43 1684,44 1686,44 1686,55 1688,55 1688,53 1690,53 1690,61 1692,61 1692,59 1694,59 1694,51 1696,51 1696,56 1698,56 1698,62 1700,62 1700,60 1702,60 1702,57 1704,57 1704,63 1706,63 1706,59 1708,59 1708,60 1710,60 1710,58 1712,58 1712,61 1714,61 1714,54 1716,54 1716,52 1718,52 1718,54 1720,54 1720,65 1722,65 1720,67 1722,67 1718,79 1720,79 1716,77 1718,77 1714,72 1716,72 1712,82 1714,82 1710,77 1712,77 1708,75 1710,75 1706,72 1708,72 1704,71 1706,71 1702,70 1704,70 1700,72 1702,72 1698,69 1700,69 1696,75 1698,75 1694,73 1696,73 1692,72 1694,72 1690,79 1692,79 1688,74 1690,74 1686,78 1688,78 1684,78 1686,78 1682,80 1684,80 1680,83 1682,83 1678,84 1680,84 1676,79 1678,79 1674,85 1676,85 1672,86 1674,86 1670,83 1672,83 1668,86 1670,86 1666,83 1668,83 1664,84 1666,84 1662,80 1664,80 1660,81 1662,81 1658,80 1660,80 1656,77 1658,77 1654,79 1656,79 1652,76 1654,76 1650,77 1652,77 1648,78 1650,78 1646,84 1648,84 1644,76 1646,76 1642,80 1644,80 1640,81 1642,81 1638,78 1640,78 1636,77 1638,77 1634,82 1636,82 1632,91 1634,91 1630,83 1632,83 1628,82 1630,82 1626,80 1628,80 1624,85 1626,85 1622,85 1624,85 1620,83 1622,83 1618,84 1620,84 1616,86 1618,86 1614,86 1616,86 1612,89 1614,89 1610,84 1612,84 1608,94 1610,94 1606,82 1608,82 1604,86 1606,86 1602,87 1604,87 1600,84 1602,84 1598,81 1600,81 1596,79 1598,79 1594,74 1596,74 1592,77 1594,77 1590,81 1592,81 1588,79 1590,79 1586,75 1588,75 1584,76 1586,76 1582,74 1584,74 1580,78 1582,78 1578,72 1580,72 1576,72 1578,72 1574,73 1576,73 1572,80 1574,80 1570,75 1572,75 1568,82 1570,82 1566,75 1568,75 1564,77 1566,77 1562,83 1564,83 1560,80 1562,80 1558,83 1560,83 1556,83 1558,83 1554,83 1556,83 1552,83 1554,83 1550,77 1552,77 1548,76 1550,76 1546,80 1548,80 1544,79 1546,79 1542,77 1544,77 1540,74 1542,74 1538,73 1540,73 1536,69 1538,69 1534,69 1536,69 1532,69 1534,69 1530,68 1532,68 1528,69 1530,69 1526,72 1528,72 1524,82 1526,82 1522,75 1524,75 1520,74 1522,74 1518,72 1520,72 1516,75 1518,75 1514,72 1516,72 1512,73 1514,73 1510,74 1512,74 1508,74 1510,74 1506,76 1508,76 1504,76 1506,76 1502,77 1504,77 1500,76 1502,76 1498,78 1500,78 1496,80 1498,80 1494,80 1496,80 1492,79 1494,79 1490,75 1492,75 1488,73 1490,73 1486,75 1488,75 1484,77 1486,77 1482,72 1484,72 1480,73 1482,73 1478,72 1480,72 1476,78 1478,78 1474,75 1476,75 1472,71 1474,71 1470,76 1472,76 1468,73 1470,73 1466,74 1468,74 1464,76 1466,76 1462,74 1464,74 1460,78 1462,78 1458,74 1460,74 1456,78 1458,78 1454,77 1456,77 1452,82 1454,82 1450,86 1452,86 1448,81 1450,81 1446,78 1448,78 1444,80 1446,80 1442,81 1444,81 1440,81 1442,81 1438,78 1440,78 1436,79 1438,79 1434,88 1436,88 1432,78 1434,78 1430,79 1432,79 1428,76 1430,76 1426,77 1428,77 1424,80 1426,80 1422,74 1424,74 1420,85 1422,85 1418,77 1420,77 1416,77 1418,77 1414,75 1416,75 1412,74 1414,74 1410,76 1412,76 1408,73 1410,73 1406,76 1408,76 1404,78 1406,78 1402,74 1404,74 1400,80 1402,80 1398,77 1400,77 1396,81 1398,81 1394,79 1396,79 1392,84 1394,84 1390,79 1392,79 1388,82 1390,82 1386,83 1388,83 1384,79 1386,79 1382,80 1384,80 1380,81 1382,81 1378,77 1380,77 1376,82 1378,82 1374,78 1376,78 1372,76 1374,76 1370,74 1372,74 1368,75 1370,75 1366,75 1368,75 1364,76 1366,76 1362,77 1364,77 1360,82 1362,82 1358,69 1360,69 1356,71 1358,71 1354,73 1356,73 1352,69 1354,69 1350,72 1352,72 1348,70 1350,70 1346,75 1348,75 1344,75 1346,75 1342,76 1344,76 1340,74 1342,74 1338,77 1340,77 1336,81 1338,81 1334,77 1336,77 1332,79 1334,79 1330,82 1332,82 1328,75 1330,75 1326,76 1328,76 1324,76 1326,76 1322,77 1324,77 1320,78 1322,78 1318,76 1320,76 1316,74 1318,74 1314,73 1316,73 1312,71 1314,71 1310,72 1312,72 1308,73 1310,73 1306,74 1308,74 1304,76 1306,76 1302,73 1304,73 1300,73 1302,73 1298,71 1300,71 1296,74 1298,74 1294,69 1296,69 1292,68 1294,68 1290,68 1292,68 1288,70 1290,70 1286,70 1288,70 1284,68 1286,68 1282,68 1284,68 1280,68 1282,68 1278,70 1280,70 1276,68 1278,68 1274,70 1276,70 1272,70 1274,70 1270,70 1272,70 1268,71 1270,71 1266,71 1268,71 1264,70 1266,70 1262,71 1264,71 1260,71 1262,71 1258,70 1260,70 1256,70 1258,70 1254,69 1256,69 1252,69 1254,69 1250,69 1252,69 1248,69 1250,69 1246,70 1248,70 1244,68 1246,68 1242,68 1244,68 1240,70 1242,70 1238,68 1240,68 1236,69 1238,69 1234,69 1236,69 1232,69 1234,69 1230,69 1232,69 1228,71 1230,71 1226,70 1228,70 1224,72 1226,72 1222,71 1224,71 1220,72 1222,72 1218,74 1220,74 1216,72 1218,72 1214,71 1216,71 1212,71 1214,71 1210,71 1212,71 1208,74 1210,74 1206,70 1208,70 1204,70 1206,70 1202,71 1204,71 1200,70 1202,70 1198,70 1200,70 1196,70 1198,70 1194,68 1196,68 1192,69 1194,69 1190,69 1192,69 1188,69 1190,69 1186,67 1188,67 1184,67 1186,67 1182,67 1184,67 1180,67 1182,67 1178,67 1180,67 1176,67 1178,67 1174,67 1176,67 1172,67 1174,67 1170,67 1172,67 1168,67 1170,67 1166,68 1168,68 1164,67 1166,67 1162,67 1164,67 1160,67 1162,67 1158,67 1160,67 1156,73 1158,73 1154,72 1156,72 1152,74 1154,74 1150,74 1152,74 1148,70 1150,70 1146,72 1148,72 1144,72 1146,72 1142,72 1144,72 1140,69 1142,69 1138,68 1140,68 1136,69 1138,69 1134,67 1136,67 1132,70 1134,70 1130,67 1132,67 1128,69 1130,69 1126,67 1128,67 1124,69 1126,69 1122,69 1124,69 1120,69 1122,69 1118,69 1120,69 1116,68 1118,68 1114,70 1116,70 1112,71 1114,71 1110,71 1112,71 1108,73 1110,73 1106,71 1108,71 1104,78 1106,78 1102,73 1104,73 1100,72 1102,72 1098,76 1100,76 1096,74 1098,74 1094,74 1096,74 1092,74 1094,74 1090,71 1092,71 1088,72 1090,72 1086,73 1088,73 1084,71 1086,71 1082,69 1084,69 1080,70 1082,70 1078,71 1080,71 1076,67 1078,67 1074,67 1076,67 1072,67 1074,67 1070,67 1072,67 1068,68 1070,68 1066,67 1068,67 1064,67 1066,67 1062,67 1064,67 1060,67 1062,67 1058,67 1060,67 1056,67 1058,67 1054,67 1056,67 1052,68 1054,68 1050,69 1052,69 1048,69 1050,69 1046,68 1048,68 1044,68 1046,68 1042,68 1044,68 1040,68 1042,68 1038,68 1040,68 1036,69 1038,69 1034,69 1036,69 1032,69 1034,69 1030,68 1032,68 1028,67 1030,67 1026,68 1028,68 1024,68 1026,68 1022,69 1024,69 1020,69 1022,69 1018,69 1020,69 1016,71 1018,71 1014,69 1016,69 1012,70 1014,70 1010,70 1012,70 1008,70 1010,70 1006,68 1008,68 1004,69 1006,69 1002,69 1004,69 1000,70 1002,70 998,70 1000,70 996,71 998,71 994,74 996,74 992,70 994,70 990,70 992,70 988,72 990,72 986,72 988,72 984,70 986,70 982,72 984,72 980,73 982,73 978,74 980,74 976,70 978,70 974,70 976,70 972,67 974,67 970,67 972,67 968,67 970,67 966,67 968,67 964,67 966,67 962,67 964,67 960,67 962,67 958,67 960,67 956,67 958,67 954,67 956,67 952,67 954,67 950,67 952,67 948,68 950,68 946,68 948,68 944,72 946,72 942,70 944,70 940,70 942,70 938,71 940,71 936,71 938,71 934,71 936,71 932,71 934,71 930,71 932,71 928,69 930,69 926,71 928,71 924,71 926,71 922,71 924,71 920,69 922,69 918,70 920,70 916,70 918,70 914,70 916,70 912,69 914,69 910,68 912,68 908,69 910,69 906,68 908,68 904,68 906,68 902,67 904,67 900,68 902,68 898,68 900,68 896,72 898,72 894,69 896,69 892,69 894,69 890,68 892,68 888,68 890,68 886,70 888,70 884,68 886,68 882,69 884,69 880,71 882,71 878,70 880,70 876,70 878,70 874,72 876,72 872,71 874,71 870,72 872,72 868,72 870,72 866,73 868,73 864,70 866,70 862,71 864,71 860,71 862,71 858,70 860,70 856,70 858,70 854,71 856,71 852,69 854,69 850,71 852,71 848,69 850,69 846,70 848,70 844,70 846,70 842,70 844,70 840,68 842,68 838,71 840,71 836,70 838,70 834,69 836,69 832,71 834,71 830,71 832,71 828,71 830,71 826,70 828,70 824,71 826,71 822,72 824,72 820,73 822,73 818,73 820,73 816,73 818,73 814,67 816,67 812,67 814,67 810,67 812,67 808,67 810,67 806,67 808,67 804,67 806,67 802,67 804,67 800,72 802,72 798,70 800,70 796,69 798,69 794,71 796,71 792,71 794,71 790,70 792,70 788,69 790,69 786,69 788,69 784,69 786,69 782,68 784,68 780,70 782,70 778,71 780,71 776,70 778,70 774,69 776,69 772,70 774,70 770,70 772,70 768,71 770,71 766,70 768,70 764,72 766,72 762,73 764,73 760,72 762,72 758,72 760,72 756,72 758,72 754,73 756,73 752,72 754,72 750,71 752,71 748,70 750,70 746,70 748,70 744,70 746,70 742,70 744,70 740,68 742,68 738,69 740,69 736,69 738,69 734,68 736,68 732,67 734,67 730,68 732,68 728,69 730,69 726,69 728,69 724,67 726,67 722,68 724,68 720,69 722,69 718,68 720,68 716,69 718,69 714,70 716,70 712,69 714,69 710,71 712,71 708,71 710,71 706,70 708,70 704,73 706,73 702,70 704,70 700,72 702,72 698,71 700,71 696,72 698,72 694,71 696,71 692,71 694,71 690,70 692,70 688,69 690,69 686,70 688,70 684,69 686,69 682,69 684,69 680,70 682,70 678,69 680,69 676,68 678,68 674,70 676,70 672,67 674,67 670,70 672,70 668,70 670,70 666,69 668,69 664,70 666,70 662,72 664,72 660,69 662,69 658,71 660,71 656,72 658,72 654,72 656,72 652,72 654,72 650,72 652,72 648,74 650,74 646,71 648,71 644,73 646,73 642,73 644,73 640,74 642,74 638,71 640,71 636,68 638,68 634,68 636,68 632,68 634,68 630,67 632,67 628,67 630,67 626,67 628,67 624,67 626,67 622,67 624,67 620,67 622,67 618,67 620,67 616,67 618,67 614,67 616,67 612,67 614,67 610,67 612,67 608,67 610,67 606,68 608,68 604,67 606,67 602,70 604,70 600,73 602,73 598,71 600,71 596,73 598,73 594,72 596,72 592,74 594,74 590,73 592,73 588,73 590,73 586,74 588,74 584,72 586,72 582,72 584,72 580,71 582,71 578,71 580,71 576,73 578,73 574,73 576,73 572,72 574,72 570,70 572,70 568,69 570,69 566,69 568,69 564,73 566,73 562,68 564,68 560,70 562,70 558,69 560,69 556,69 558,69 554,68 556,68 552,68 554,68 550,73 552,73 548,68 550,68 546,69 548,69 544,67 546,67 542,67 544,67 540,67 542,67 538,67 540,67 536,67 538,67 534,67 536,67 532,67 534,67 530,67 532,67 528,67 530,67 526,67 528,67 524,71 526,71 522,69 524,69 520,70 522,70 518,74 520,74 516,70 518,70 514,70 516,70 512,69 514,69 510,69 512,69 508,67 510,67 506,69 508,69 504,67 506,67 502,69 504,69 500,68 502,68 498,67 500,67 496,67 498,67 494,67 496,67 492,68 494,68 490,68 492,68 488,69 490,69 486,69 488,69 484,69 486,69 482,70 484,70 480,71 482,71 478,70 480,70 476,72 478,72 474,72 476,72 472,73 474,73 470,72 472,72 468,71 470,71 466,71 468,71 464,72 466,72 462,71 464,71 460,71 462,71 458,72 460,72 456,70 458,70 454,74 456,74 452,70 454,70 450,70 452,70 448,69 450,69 446,69 448,69 444,69 446,69 442,73 444,73 440,69 442,69 438,70 440,70 436,71 438,71 434,69 436,69 432,75 434,75 430,74 432,74 428,71 430,71 426,72 428,72 424,71 426,71 422,71 424,71 420,72 422,72 418,77 420,77 416,74 418,74 414,72 416,72 412,77 414,77 410,74 412,74 408,72 410,72 406,73 408,73 404,71 406,71 402,72 404,72 400,71 402,71 398,75 400,75 396,71 398,71 394,74 396,74 392,70 394,70 390,70 392,70 388,72 390,72 386,68 388,68 384,69 386,69 382,71 384,71 380,70 382,70 378,70 380,70 376,69 378,69 374,71 376,71 372,69 374,69 370,71 372,71 368,75 370,75 366,70 368,70 364,72 366,72 362,71 364,71 360,71 362,71 358,72 360,72 356,70 358,70 354,70 356,70 352,70 354,70 350,70 352,70 348,70 350,70 346,71 348,71 344,69 346,69 342,73 344,73 340,68 342,68 338,70 340,70 336,70 338,70 334,67 336,67 332,67 334,67 330,67 332,67 328,67 330,67 326,67 328,67 324,67 326,67 322,67 324,67 320,67 322,67 318,68 320,68 316,67 318,67 314,67 316,67 312,67 314,67 310,67 312,67 308,67 310,67 306,70 308,70 304,71 306,71 302,71 304,71 300,76 302,76 298,71 300,71 296,73 298,73 294,74 296,74 292,71 294,71 290,70 292,70 288,72 290,72 286,76 288,76 284,72 286,72 282,68 284,68 280,71 282,71 278,71 280,71 276,70 278,70 274,70 276,70 272,68 274,68 270,71 272,71 268,70 270,70 266,68 268,68 264,69 266,69 262,71 264,71 260,71 262,71 258,72 260,72 256,72 258,72 254,72 256,72 252,74 254,74 250,75 252,75 248,73 250,73 246,75 248,75 244,75 246,75 242,74 244,74 240,74 242,74 238,73 240,73 236,78 238,78 234,73 236,73 232,73 234,73 230,72 232,72 228,72 230,72 226,67 228,67 224,67 226,67 222,67 224,67 220,67 222,67 218,67 220,67 216,67 218,67 214,67 216,67 212,67 214,67 210,67 212,67 208,68 210,68 206,67 208,67 204,68 206,68 202,69 204,69 200,69 202,69 198,69 200,69 196,69 198,69 194,70 196,70 192,70 194,70 190,69 192,69 188,69 190,69 186,70 188,70 184,69 186,69 182,67 184,67 180,67 182,67 178,67 180,67 176,67 178,67 174,67 176,67 172,72 174,72 170,71 172,71 168,71 170,71 166,69 168,69 164,71 166,71 162,69 164,69 160,69 162,69 158,68 160,68 156,70 158,70 154,69 156,69 152,73 154,73 150,70 152,70 148,68 150,68 146,71 148,71 144,71 146,71 142,70 144,70 140,71 142,71 138,71 140,71 136,70 138,70 134,71 136,71 132,71 134,71 130,71 132,71 128,75 130,75 126,72 128,72 124,70 126,70 122,71 124,71 120,67 122,67 118,67 120,67 116,67 118,67 114,67 116,67 112,67 114,67 110,67 112,67 108,67 110,67 106,67 108,67 104,67 106,67 102,67 104,67 100,67 102,67 98,67 100,67 96,67 98,67 94,69 96,69 92,67 94,67 90,70 92,70 88,68 90,68 86,69 88,69 84,69 86,69 82,69 84,69 80,70 82,70 78,69 80,69 76,70 78,70 74,71 76,71 72,72 74,72 70,75 72,75 68,71 70,71 66,70 68,70 64,70 66,70 62,72 64,72 60,72 62,72 58,70 60,70 56,69 58,69 54,69 56,69 52,70 54,70 50,71 52,71 48,70 50,70 46,69 48,69 44,69 46,69 42,70 44,70 40,70 42,70 38,69 40,69 36,70 38,70 34,70 36,70 32,70 34,70 30,70 32,70 28,71 30,71 26,71 28,71 24,71 26,71 22,73 24,73 20,73 22,73 18,72 20,72 16,72 18,72 14,72 16,72 12,67 14,67 10,67 12,67 8,67 10,67 6,67 8,67 4,67 6,67" fill="#d2dcf8" shape-rendering="crispEdges"/></svg><svg style="position:absolute;left:1111px;top:337px;" width="36" height="40" viewBox="0 0 36 40"><path d="M3 6a5 5 0 0 1 5-5h20a5 5 0 0 1 5 5v13L18 34 3 19z" fill="#a9a9a9"/></svg><div style="position:absolute;left:1127px;top:298px;width:2px;height:40px;background:repeating-linear-gradient(#fff 0 2px,transparent 2px 4px)"></div><div style="position:absolute;left:1126.5px;top:340px;width:4px;height:1304px;background:#111"></div><div style="position:absolute;left:1127.5px;top:340px;width:2.2px;height:1304px;background:#f6f6f6"></div><div style="position:absolute;left:1110px;top:298px;width:8px;height:1350px;background:linear-gradient(90deg,rgba(0,0,0,.35),rgba(0,0,0,0))"></div><div style="position:absolute;left:460px;top:1648px;width:2419px;height:28px;background:#3b3b3b"></div><div style="position:absolute;left:1110px;top:1648px;width:1px;height:28px;background:#2a2a2a"></div><div style="position:absolute;left:1116px;top:1656px;width:240px;height:17px;background:#6c6c6c;border-radius:9px"></div><div style="position:absolute;left:0px;top:224px;width:2px;height:1440px;background:#707070"></div><div style="position:absolute;left:0px;top:1675px;width:2878px;height:1.5px;background:#6a6a6a"></div><svg style="position:absolute;left:0px;top:1655px;" width="24" height="24" viewBox="0 0 24 24"><path d="M0 0V24H24A24 24 0 0 1 0 0z" fill="#34203f"/><path d="M1 0A23 23 0 0 0 24 23" fill="none" stroke="#707070" stroke-width="2"/></svg><svg style="position:absolute;left:2854px;top:1655px;" width="26" height="24" viewBox="0 0 26 24"><path d="M24 0V24H0A24 24 0 0 0 24 0z" fill="#34203f"/><path d="M23 0A23 23 0 0 1 0 23" fill="none" stroke="#555" stroke-width="2"/><rect x="24" y="0" width="2" height="24" fill="#34203f"/></svg><div style="position:absolute;left:27px;top:655px;width:502px;height:1010px;background:#3b3639;border-radius:12px;box-shadow:0 0 0 1px #111,inset 0 0 0 1px #5b575a,0 10px 40px rgba(0,0,0,.45)"></div><svg style="position:absolute;left:45px;top:680px;" width="20" height="18" viewBox="0 0 20 18"><path d="M2 9l5.5 6L18 2" fill="none" stroke="#f0eeef" stroke-width="3"/></svg><div style="position:absolute;left:72.5px;top:675.0px;font-size:24.3px;line-height:27.9px;color:#f0eeef;font-weight:400;letter-spacing:0px;white-space:pre;">No Plug-in</div><div style="position:absolute;left:48px;top:718px;width:460px;height:2px;background:#5d595c"></div><div style="position:absolute;left:72.5px;top:738.0px;font-size:24.3px;line-height:27.9px;color:#8b878a;font-weight:400;letter-spacing:0px;white-space:pre;">Recent</div><div style="position:absolute;left:72.5px;top:780.0px;font-size:24.3px;line-height:27.9px;color:#f0eeef;font-weight:400;letter-spacing:0px;white-space:pre;">Shadow Hills Mastering Compress</div><svg style="position:absolute;left:492px;top:781px;" width="16" height="24" viewBox="0 0 16 24"><path d="M4 3.500l8 8.500-8 8.500" fill="none" stroke="#f0eeef" stroke-width="2.900" stroke-linecap="round" stroke-linejoin="round"/></svg><div style="position:absolute;left:72.5px;top:822.0px;font-size:24.3px;line-height:27.9px;color:#f0eeef;font-weight:400;letter-spacing:0px;white-space:pre;">Oxford SuprEsser</div><svg style="position:absolute;left:492px;top:823px;" width="16" height="24" viewBox="0 0 16 24"><path d="M4 3.500l8 8.500-8 8.500" fill="none" stroke="#f0eeef" stroke-width="2.900" stroke-linecap="round" stroke-linejoin="round"/></svg><div style="position:absolute;left:72.5px;top:864.0px;font-size:24.3px;line-height:27.9px;color:#f0eeef;font-weight:400;letter-spacing:0px;white-space:pre;">Ozone 11 Equalizer</div><svg style="position:absolute;left:492px;top:865px;" width="16" height="24" viewBox="0 0 16 24"><path d="M4 3.500l8 8.500-8 8.500" fill="none" stroke="#f0eeef" stroke-width="2.900" stroke-linecap="round" stroke-linejoin="round"/></svg><div style="position:absolute;left:72.5px;top:906.0px;font-size:24.3px;line-height:27.9px;color:#f0eeef;font-weight:400;letter-spacing:0px;white-space:pre;">Auto-Tune Artist</div><svg style="position:absolute;left:492px;top:907px;" width="16" height="24" viewBox="0 0 16 24"><path d="M4 3.500l8 8.500-8 8.500" fill="none" stroke="#f0eeef" stroke-width="2.900" stroke-linecap="round" stroke-linejoin="round"/></svg><div style="position:absolute;left:72.5px;top:948.0px;font-size:24.3px;line-height:27.9px;color:#f0eeef;font-weight:400;letter-spacing:0px;white-space:pre;">RVox (m)</div><svg style="position:absolute;left:492px;top:949px;" width="16" height="24" viewBox="0 0 16 24"><path d="M4 3.500l8 8.500-8 8.500" fill="none" stroke="#f0eeef" stroke-width="2.900" stroke-linecap="round" stroke-linejoin="round"/></svg><div style="position:absolute;left:48px;top:992px;width:460px;height:2px;background:#5d595c"></div><div style="position:absolute;left:38px;top:1298px;width:479px;height:42px;background:#555053;border-radius:7px"></div><div style="position:absolute;left:72.5px;top:1012.0px;font-size:24.3px;line-height:27.9px;color:#f0eeef;font-weight:400;letter-spacing:0px;white-space:pre;">Amps and Pedals</div><svg style="position:absolute;left:492px;top:1013px;" width="16" height="24" viewBox="0 0 16 24"><path d="M4 3.500l8 8.500-8 8.500" fill="none" stroke="#f0eeef" stroke-width="2.900" stroke-linecap="round" stroke-linejoin="round"/></svg><div style="position:absolute;left:72.5px;top:1054.0px;font-size:24.3px;line-height:27.9px;color:#f0eeef;font-weight:400;letter-spacing:0px;white-space:pre;">Delay</div><svg style="position:absolute;left:492px;top:1055px;" width="16" height="24" viewBox="0 0 16 24"><path d="M4 3.500l8 8.500-8 8.500" fill="none" stroke="#f0eeef" stroke-width="2.900" stroke-linecap="round" stroke-linejoin="round"/></svg><div style="position:absolute;left:72.5px;top:1096.0px;font-size:24.3px;line-height:27.9px;color:#f0eeef;font-weight:400;letter-spacing:0px;white-space:pre;">Distortion</div><svg style="position:absolute;left:492px;top:1097px;" width="16" height="24" viewBox="0 0 16 24"><path d="M4 3.500l8 8.500-8 8.500" fill="none" stroke="#f0eeef" stroke-width="2.900" stroke-linecap="round" stroke-linejoin="round"/></svg><div style="position:absolute;left:72.5px;top:1138.0px;font-size:24.3px;line-height:27.9px;color:#f0eeef;font-weight:400;letter-spacing:0px;white-space:pre;">Dynamics</div><svg style="position:absolute;left:492px;top:1139px;" width="16" height="24" viewBox="0 0 16 24"><path d="M4 3.500l8 8.500-8 8.500" fill="none" stroke="#f0eeef" stroke-width="2.900" stroke-linecap="round" stroke-linejoin="round"/></svg><div style="position:absolute;left:72.5px;top:1180.0px;font-size:24.3px;line-height:27.9px;color:#f0eeef;font-weight:400;letter-spacing:0px;white-space:pre;">EQ</div><svg style="position:absolute;left:492px;top:1181px;" width="16" height="24" viewBox="0 0 16 24"><path d="M4 3.500l8 8.500-8 8.500" fill="none" stroke="#f0eeef" stroke-width="2.900" stroke-linecap="round" stroke-linejoin="round"/></svg><div style="position:absolute;left:72.5px;top:1222.0px;font-size:24.3px;line-height:27.9px;color:#f0eeef;font-weight:400;letter-spacing:0px;white-space:pre;">Filter</div><svg style="position:absolute;left:492px;top:1223px;" width="16" height="24" viewBox="0 0 16 24"><path d="M4 3.500l8 8.500-8 8.500" fill="none" stroke="#f0eeef" stroke-width="2.900" stroke-linecap="round" stroke-linejoin="round"/></svg><div style="position:absolute;left:72.5px;top:1264.0px;font-size:24.3px;line-height:27.9px;color:#f0eeef;font-weight:400;letter-spacing:0px;white-space:pre;">Imaging</div><svg style="position:absolute;left:492px;top:1265px;" width="16" height="24" viewBox="0 0 16 24"><path d="M4 3.500l8 8.500-8 8.500" fill="none" stroke="#f0eeef" stroke-width="2.900" stroke-linecap="round" stroke-linejoin="round"/></svg><div style="position:absolute;left:72.5px;top:1306.0px;font-size:24.3px;line-height:27.9px;color:#f0eeef;font-weight:400;letter-spacing:0px;white-space:pre;">Metering</div><svg style="position:absolute;left:492px;top:1307px;" width="16" height="24" viewBox="0 0 16 24"><path d="M4 3.500l8 8.500-8 8.500" fill="none" stroke="#f0eeef" stroke-width="2.900" stroke-linecap="round" stroke-linejoin="round"/></svg><div style="position:absolute;left:72.5px;top:1348.0px;font-size:24.3px;line-height:27.9px;color:#f0eeef;font-weight:400;letter-spacing:0px;white-space:pre;">Modulation</div><svg style="position:absolute;left:492px;top:1349px;" width="16" height="24" viewBox="0 0 16 24"><path d="M4 3.500l8 8.500-8 8.500" fill="none" stroke="#f0eeef" stroke-width="2.900" stroke-linecap="round" stroke-linejoin="round"/></svg><div style="position:absolute;left:72.5px;top:1390.0px;font-size:24.3px;line-height:27.9px;color:#f0eeef;font-weight:400;letter-spacing:0px;white-space:pre;">Multi Effects</div><svg style="position:absolute;left:492px;top:1391px;" width="16" height="24" viewBox="0 0 16 24"><path d="M4 3.500l8 8.500-8 8.500" fill="none" stroke="#f0eeef" stroke-width="2.900" stroke-linecap="round" stroke-linejoin="round"/></svg><div style="position:absolute;left:72.5px;top:1432.0px;font-size:24.3px;line-height:27.9px;color:#f0eeef;font-weight:400;letter-spacing:0px;white-space:pre;">Pitch</div><svg style="position:absolute;left:492px;top:1433px;" width="16" height="24" viewBox="0 0 16 24"><path d="M4 3.500l8 8.500-8 8.500" fill="none" stroke="#f0eeef" stroke-width="2.900" stroke-linecap="round" stroke-linejoin="round"/></svg><div style="position:absolute;left:72.5px;top:1474.0px;font-size:24.3px;line-height:27.9px;color:#f0eeef;font-weight:400;letter-spacing:0px;white-space:pre;">Reverb</div><svg style="position:absolute;left:492px;top:1475px;" width="16" height="24" viewBox="0 0 16 24"><path d="M4 3.500l8 8.500-8 8.500" fill="none" stroke="#f0eeef" stroke-width="2.900" stroke-linecap="round" stroke-linejoin="round"/></svg><div style="position:absolute;left:72.5px;top:1516.0px;font-size:24.3px;line-height:27.9px;color:#f0eeef;font-weight:400;letter-spacing:0px;white-space:pre;">Specialized</div><svg style="position:absolute;left:492px;top:1517px;" width="16" height="24" viewBox="0 0 16 24"><path d="M4 3.500l8 8.500-8 8.500" fill="none" stroke="#f0eeef" stroke-width="2.900" stroke-linecap="round" stroke-linejoin="round"/></svg><div style="position:absolute;left:72.5px;top:1558.0px;font-size:24.3px;line-height:27.9px;color:#f0eeef;font-weight:400;letter-spacing:0px;white-space:pre;">Utility</div><svg style="position:absolute;left:492px;top:1559px;" width="16" height="24" viewBox="0 0 16 24"><path d="M4 3.500l8 8.500-8 8.500" fill="none" stroke="#f0eeef" stroke-width="2.900" stroke-linecap="round" stroke-linejoin="round"/></svg><div style="position:absolute;left:48px;top:1602px;width:460px;height:2px;background:#5d595c"></div><div style="position:absolute;left:72.5px;top:1622.5px;font-size:24.3px;line-height:27.9px;color:#f0eeef;font-weight:400;letter-spacing:0px;white-space:pre;">Audio Units</div><svg style="position:absolute;left:492px;top:1623.5px;" width="16" height="24" viewBox="0 0 16 24"><path d="M4 3.500l8 8.500-8 8.500" fill="none" stroke="#f0eeef" stroke-width="2.900" stroke-linecap="round" stroke-linejoin="round"/></svg><div style="position:absolute;left:518px;top:1288px;width:290px;height:271px;background:#3b3639;border-radius:12px;box-shadow:0 0 0 1px #111,inset 0 0 0 1px #5b575a,0 10px 30px rgba(0,0,0,.45)"></div><div style="position:absolute;left:528px;top:1298px;width:269px;height:42px;background:#555053;border-radius:7px"></div><div style="position:absolute;left:538.5px;top:1306.0px;font-size:24.3px;line-height:27.9px;color:#f0eeef;font-weight:400;letter-spacing:0px;white-space:pre;">BPM Counter</div><svg style="position:absolute;left:771px;top:1307px;" width="16" height="24" viewBox="0 0 16 24"><path d="M4 3.500l8 8.500-8 8.500" fill="none" stroke="#f0eeef" stroke-width="2.900" stroke-linecap="round" stroke-linejoin="round"/></svg><div style="position:absolute;left:538.5px;top:1348.0px;font-size:24.3px;line-height:27.9px;color:#f0eeef;font-weight:400;letter-spacing:0px;white-space:pre;">Correlation Meter</div><svg style="position:absolute;left:771px;top:1349px;" width="16" height="24" viewBox="0 0 16 24"><path d="M4 3.500l8 8.500-8 8.500" fill="none" stroke="#f0eeef" stroke-width="2.900" stroke-linecap="round" stroke-linejoin="round"/></svg><div style="position:absolute;left:538.5px;top:1390.0px;font-size:24.3px;line-height:27.9px;color:#f0eeef;font-weight:400;letter-spacing:0px;white-space:pre;">Level Meter</div><svg style="position:absolute;left:771px;top:1391px;" width="16" height="24" viewBox="0 0 16 24"><path d="M4 3.500l8 8.500-8 8.500" fill="none" stroke="#f0eeef" stroke-width="2.900" stroke-linecap="round" stroke-linejoin="round"/></svg><div style="position:absolute;left:538.5px;top:1432.0px;font-size:24.3px;line-height:27.9px;color:#f0eeef;font-weight:400;letter-spacing:0px;white-space:pre;">Loudness Meter</div><svg style="position:absolute;left:771px;top:1433px;" width="16" height="24" viewBox="0 0 16 24"><path d="M4 3.500l8 8.500-8 8.500" fill="none" stroke="#f0eeef" stroke-width="2.900" stroke-linecap="round" stroke-linejoin="round"/></svg><div style="position:absolute;left:538.5px;top:1474.0px;font-size:24.3px;line-height:27.9px;color:#f0eeef;font-weight:400;letter-spacing:0px;white-space:pre;">MultiMeter</div><svg style="position:absolute;left:771px;top:1475px;" width="16" height="24" viewBox="0 0 16 24"><path d="M4 3.500l8 8.500-8 8.500" fill="none" stroke="#f0eeef" stroke-width="2.900" stroke-linecap="round" stroke-linejoin="round"/></svg><div style="position:absolute;left:538.5px;top:1516.0px;font-size:24.3px;line-height:27.9px;color:#f0eeef;font-weight:400;letter-spacing:0px;white-space:pre;">Tuner</div><svg style="position:absolute;left:771px;top:1517px;" width="16" height="24" viewBox="0 0 16 24"><path d="M4 3.500l8 8.500-8 8.500" fill="none" stroke="#f0eeef" stroke-width="2.900" stroke-linecap="round" stroke-linejoin="round"/></svg><div style="position:absolute;left:798px;top:1288px;width:112px;height:61px;background:#3b3639;border-radius:12px;box-shadow:0 0 0 1px #111,inset 0 0 0 1px #5b575a,0 10px 30px rgba(0,0,0,.45)"></div><div style="position:absolute;left:808px;top:1298px;width:92px;height:42px;background:#3a72cc;border-radius:7px"></div><div style="position:absolute;left:808.0px;width:92px;text-align:center;top:1306.0px;font-size:24.3px;line-height:27.9px;color:#fff;font-weight:400;letter-spacing:0px;white-space:pre">Stereo</div>
</body></html>
